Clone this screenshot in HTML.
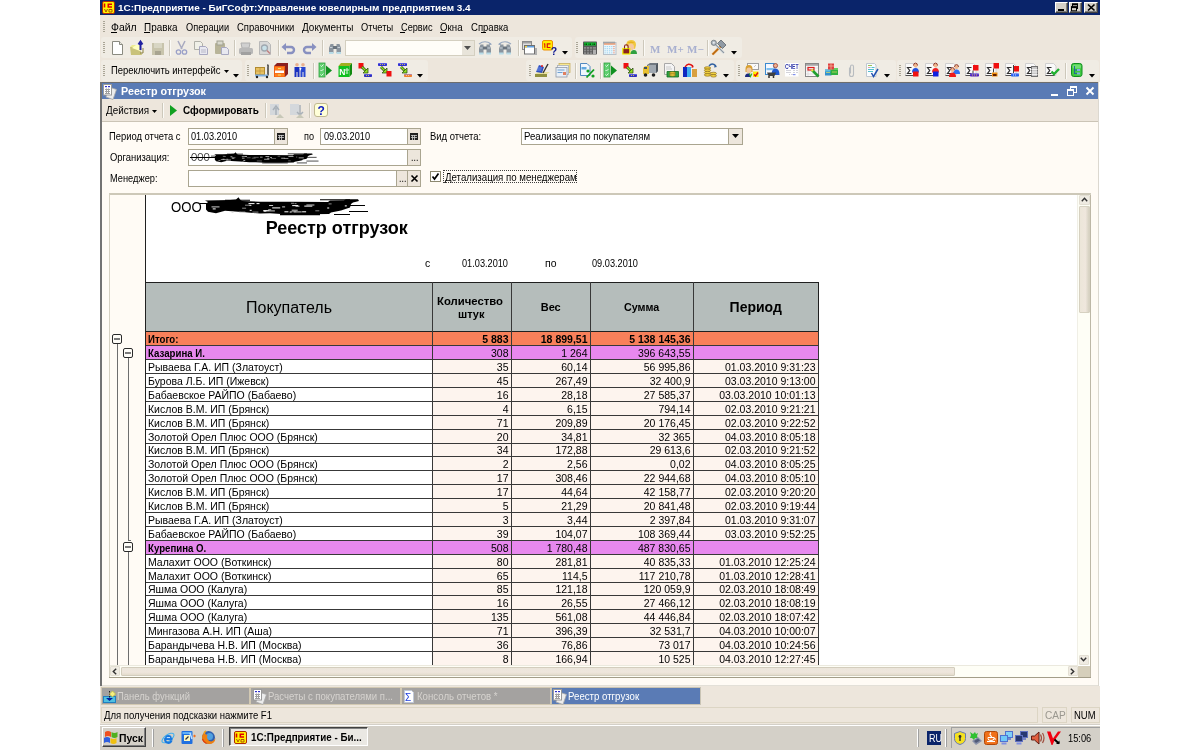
<!DOCTYPE html><html><head><meta charset="utf-8"><style>
html,body{margin:0;padding:0;width:1200px;height:750px;overflow:hidden;background:#fff;}
body{position:relative;font-family:"Liberation Sans",sans-serif;}
div,span{position:absolute;box-sizing:border-box;}
.t{white-space:nowrap;line-height:1;transform-origin:left top;}
.r{transform-origin:right top;}
</style></head><body><div id="root" style="position:absolute;left:0;top:0;width:1200px;height:750px;will-change:transform;">
<div style="left:100px;top:0px;width:1000px;height:750px;background:#ede6dc;"></div>
<div style="left:100px;top:0px;width:1000px;height:15px;background:#0a246a;"></div>
<svg style="position:absolute;left:102px;top:1px;overflow:visible" width="13" height="13" viewBox="0 0 13 13"><rect x="0.5" y="0.5" width="12" height="12" rx="1.5" fill="#fff200" stroke="#b02a00"/><path d="M2.5 2.5v4M4.5 3.5h0" stroke="#e00000" stroke-width="1.6"/><path d="M10 3.2H6.3V6H10" fill="none" stroke="#e00000" stroke-width="1.6"/><path d="M2.5 8l1.5 3l1.5-3M7 8.5h3v2.5h-3z" fill="none" stroke="#b05000" stroke-width="1"/></svg>
<span class="t" style="left:118px;top:2.87px;font-size:9.6px;font-weight:bold;color:#fff;transform:scaleX(1.038);">1С:Предприятие - БиГСофт:Управление ювелирным предприятием 3.4</span>
<div style="left:1055px;top:2px;width:13px;height:11px;background:#d4d0c8;border-top:1px solid #fff;border-left:1px solid #fff;border-right:1px solid #404040;border-bottom:1px solid #404040;box-shadow:inset -1px -1px #808080;"></div>
<div style="left:1069px;top:2px;width:13px;height:11px;background:#d4d0c8;border-top:1px solid #fff;border-left:1px solid #fff;border-right:1px solid #404040;border-bottom:1px solid #404040;box-shadow:inset -1px -1px #808080;"></div>
<div style="left:1084px;top:2px;width:14px;height:11px;background:#d4d0c8;border-top:1px solid #fff;border-left:1px solid #fff;border-right:1px solid #404040;border-bottom:1px solid #404040;box-shadow:inset -1px -1px #808080;"></div>
<svg style="position:absolute;left:1055px;top:2px;overflow:visible" width="13" height="11" viewBox="0 0 13 11"><rect x="3" y="7" width="6" height="2" fill="#000"/></svg>
<svg style="position:absolute;left:1069px;top:2px;overflow:visible" width="13" height="11" viewBox="0 0 13 11"><rect x="3.5" y="2" width="5" height="4.5" fill="none" stroke="#000"/><rect x="3" y="1.5" width="6" height="1.8" fill="#000"/><rect x="2.5" y="4.8" width="5" height="4" fill="#d4d0c8" stroke="#000"/><rect x="2" y="4.3" width="6" height="1.8" fill="#000"/></svg>
<svg style="position:absolute;left:1084px;top:2px;overflow:visible" width="14" height="11" viewBox="0 0 14 11"><path d="M4 2.5 L10.5 8.5 M10.5 2.5 L4 8.5" stroke="#000" stroke-width="1.7"/></svg>
<svg style="position:absolute;left:103px;top:21px;overflow:visible" width="2" height="12" viewBox="0 0 2 12"><rect x="0" y="0" width="2" height="1" fill="#aaa596"/><rect x="0" y="2" width="2" height="1" fill="#aaa596"/><rect x="0" y="4" width="2" height="1" fill="#aaa596"/><rect x="0" y="6" width="2" height="1" fill="#aaa596"/><rect x="0" y="8" width="2" height="1" fill="#aaa596"/><rect x="0" y="10" width="2" height="1" fill="#aaa596"/></svg>
<span class="t" style="left:111.3px;top:21.69px;font-size:11px;color:#000;transform:scaleX(0.95);">Файл</span>
<div style="left:111px;top:32px;width:6px;height:1px;background:#000;"></div>
<span class="t" style="left:144px;top:21.69px;font-size:11px;color:#000;transform:scaleX(0.902);">Правка</span>
<div style="left:144px;top:32px;width:6px;height:1px;background:#000;"></div>
<span class="t" style="left:185.8px;top:21.69px;font-size:11px;color:#000;transform:scaleX(0.839);">Операции</span>
<span class="t" style="left:236.7px;top:21.69px;font-size:11px;color:#000;transform:scaleX(0.86);">Справочники</span>
<span class="t" style="left:301.9px;top:21.69px;font-size:11px;color:#000;transform:scaleX(0.905);">Документы</span>
<span class="t" style="left:360.9px;top:21.69px;font-size:11px;color:#000;transform:scaleX(0.844);">Отчеты</span>
<span class="t" style="left:400.5px;top:21.69px;font-size:11px;color:#000;transform:scaleX(0.836);">Сервис</span>
<div style="left:400px;top:32px;width:5px;height:1px;background:#000;"></div>
<span class="t" style="left:440.4px;top:21.69px;font-size:11px;color:#000;transform:scaleX(0.884);">Окна</span>
<div style="left:440px;top:32px;width:6px;height:1px;background:#000;"></div>
<span class="t" style="left:470.6px;top:21.69px;font-size:11px;color:#000;transform:scaleX(0.867);">Справка</span>
<div style="left:481px;top:32px;width:5px;height:1px;background:#000;"></div>
<div style="left:101px;top:37px;width:471px;height:21px;background:#f0ece4;border-radius:3px;"></div>
<div style="left:575px;top:37px;width:167px;height:21px;background:#f0ece4;border-radius:3px;"></div>
<div style="left:101px;top:60px;width:141px;height:21px;background:#f0ece4;border-radius:3px;"></div>
<div style="left:245px;top:60px;width:183px;height:21px;background:#f0ece4;border-radius:3px;"></div>
<div style="left:526px;top:60px;width:208px;height:21px;background:#f0ece4;border-radius:3px;"></div>
<div style="left:736px;top:60px;width:160px;height:21px;background:#f0ece4;border-radius:3px;"></div>
<div style="left:897px;top:60px;width:202px;height:21px;background:#f0ece4;border-radius:3px;"></div>
<svg style="position:absolute;left:103px;top:42px;overflow:visible" width="2" height="12" viewBox="0 0 2 12"><rect x="0" y="0" width="2" height="1" fill="#aaa596"/><rect x="0" y="2" width="2" height="1" fill="#aaa596"/><rect x="0" y="4" width="2" height="1" fill="#aaa596"/><rect x="0" y="6" width="2" height="1" fill="#aaa596"/><rect x="0" y="8" width="2" height="1" fill="#aaa596"/><rect x="0" y="10" width="2" height="1" fill="#aaa596"/></svg>
<svg style="position:absolute;left:576px;top:42px;overflow:visible" width="2" height="12" viewBox="0 0 2 12"><rect x="0" y="0" width="2" height="1" fill="#aaa596"/><rect x="0" y="2" width="2" height="1" fill="#aaa596"/><rect x="0" y="4" width="2" height="1" fill="#aaa596"/><rect x="0" y="6" width="2" height="1" fill="#aaa596"/><rect x="0" y="8" width="2" height="1" fill="#aaa596"/><rect x="0" y="10" width="2" height="1" fill="#aaa596"/></svg>
<svg style="position:absolute;left:103px;top:65px;overflow:visible" width="2" height="12" viewBox="0 0 2 12"><rect x="0" y="0" width="2" height="1" fill="#aaa596"/><rect x="0" y="2" width="2" height="1" fill="#aaa596"/><rect x="0" y="4" width="2" height="1" fill="#aaa596"/><rect x="0" y="6" width="2" height="1" fill="#aaa596"/><rect x="0" y="8" width="2" height="1" fill="#aaa596"/><rect x="0" y="10" width="2" height="1" fill="#aaa596"/></svg>
<svg style="position:absolute;left:247px;top:65px;overflow:visible" width="2" height="12" viewBox="0 0 2 12"><rect x="0" y="0" width="2" height="1" fill="#aaa596"/><rect x="0" y="2" width="2" height="1" fill="#aaa596"/><rect x="0" y="4" width="2" height="1" fill="#aaa596"/><rect x="0" y="6" width="2" height="1" fill="#aaa596"/><rect x="0" y="8" width="2" height="1" fill="#aaa596"/><rect x="0" y="10" width="2" height="1" fill="#aaa596"/></svg>
<svg style="position:absolute;left:529px;top:65px;overflow:visible" width="2" height="12" viewBox="0 0 2 12"><rect x="0" y="0" width="2" height="1" fill="#aaa596"/><rect x="0" y="2" width="2" height="1" fill="#aaa596"/><rect x="0" y="4" width="2" height="1" fill="#aaa596"/><rect x="0" y="6" width="2" height="1" fill="#aaa596"/><rect x="0" y="8" width="2" height="1" fill="#aaa596"/><rect x="0" y="10" width="2" height="1" fill="#aaa596"/></svg>
<svg style="position:absolute;left:738px;top:65px;overflow:visible" width="2" height="12" viewBox="0 0 2 12"><rect x="0" y="0" width="2" height="1" fill="#aaa596"/><rect x="0" y="2" width="2" height="1" fill="#aaa596"/><rect x="0" y="4" width="2" height="1" fill="#aaa596"/><rect x="0" y="6" width="2" height="1" fill="#aaa596"/><rect x="0" y="8" width="2" height="1" fill="#aaa596"/><rect x="0" y="10" width="2" height="1" fill="#aaa596"/></svg>
<svg style="position:absolute;left:899px;top:65px;overflow:visible" width="2" height="12" viewBox="0 0 2 12"><rect x="0" y="0" width="2" height="1" fill="#aaa596"/><rect x="0" y="2" width="2" height="1" fill="#aaa596"/><rect x="0" y="4" width="2" height="1" fill="#aaa596"/><rect x="0" y="6" width="2" height="1" fill="#aaa596"/><rect x="0" y="8" width="2" height="1" fill="#aaa596"/><rect x="0" y="10" width="2" height="1" fill="#aaa596"/></svg>
<svg style="position:absolute;left:110px;top:40px;overflow:visible" width="16" height="16" viewBox="0 0 16 16"><path d="M2.5 1.5h7l3 3v10h-10z" fill="#fff" stroke="#8a8a80"/><path d="M9.5 1.5v3h3" fill="#e8e8e0" stroke="#8a8a80"/></svg>
<svg style="position:absolute;left:129px;top:40px;overflow:visible" width="16" height="16" viewBox="0 0 16 16"><path d="M1 7h9l3 8H2z" fill="#c9c27a"/><path d="M1 7l2-2h5l1 2" fill="#ecec90"/><path d="M3 8l4-3h4v6z" fill="#ffffc0"/><path d="M11 13h3V8" fill="none" stroke="#8a8040"/><path d="M11.5 10V2M9.5 4.5l2-3 2 3" stroke="#2020a0" stroke-width="2" fill="none"/></svg>
<svg style="position:absolute;left:151px;top:41px;overflow:visible" width="16" height="16" viewBox="0 0 16 16"><rect x="1" y="2" width="12" height="12" fill="#c8c4ac"/><rect x="3" y="2" width="8" height="5" fill="#d8d6c4"/><rect x="4" y="10" width="6" height="4" fill="#a8a490"/></svg>
<div style="left:169px;top:40px;width:1px;height:16px;background:#cdc8bb;"></div>
<div style="left:170px;top:40px;width:1px;height:16px;background:#fbfaf6;"></div>
<svg style="position:absolute;left:174px;top:40px;overflow:visible" width="16" height="16" viewBox="0 0 16 16"><path d="M4 1l4 8M11 1L7 9" stroke="#a8aac0" stroke-width="1.5"/><circle cx="4.5" cy="12" r="2.2" fill="none" stroke="#9aa0c8" stroke-width="1.3"/><circle cx="10.5" cy="12" r="2.2" fill="none" stroke="#9aa0c8" stroke-width="1.3"/></svg>
<svg style="position:absolute;left:193px;top:40px;overflow:visible" width="16" height="16" viewBox="0 0 16 16"><path d="M1.5 1.5h6l2 2v6h-8z" fill="#f0f0e8" stroke="#b0b0a8"/><path d="M6.5 6.5h6l2 2v6h-8z" fill="#e8e8f0" stroke="#a8a8c0"/><path d="M8 10h5M8 12h5" stroke="#b8b8c8"/></svg>
<svg style="position:absolute;left:214px;top:40px;overflow:visible" width="16" height="16" viewBox="0 0 16 16"><rect x="1" y="3" width="10" height="11" rx="1" fill="#b8b498"/><rect x="3" y="1" width="6" height="4" fill="#d8d8cc" stroke="#a0a090"/><path d="M7.5 7.5h5l2 2v5h-7z" fill="#e8e8f0" stroke="#a8a8c0"/></svg>
<div style="left:234px;top:40px;width:1px;height:16px;background:#cdc8bb;"></div>
<div style="left:235px;top:40px;width:1px;height:16px;background:#fbfaf6;"></div>
<svg style="position:absolute;left:238px;top:41px;overflow:visible" width="16" height="16" viewBox="0 0 16 16"><path d="M3 2h9l-1 5H4z" fill="#d0d0d0" stroke="#b0b0b0"/><rect x="1" y="7" width="14" height="6" rx="1.5" fill="#b8b8b8"/><rect x="3" y="11" width="10" height="3" fill="#a0a0a0"/></svg>
<svg style="position:absolute;left:258px;top:40px;overflow:visible" width="16" height="16" viewBox="0 0 16 16"><path d="M1.5 1.5h8l3 3v10h-11z" fill="#d8d8d8" stroke="#b8b8b8"/><circle cx="6.5" cy="8" r="3" fill="#c8e0e8" stroke="#a0a8b0" stroke-width="1.3"/><path d="M9 10.5l3 3" stroke="#c08080" stroke-width="1.5"/></svg>
<div style="left:278px;top:40px;width:1px;height:16px;background:#cdc8bb;"></div>
<div style="left:279px;top:40px;width:1px;height:16px;background:#fbfaf6;"></div>
<svg style="position:absolute;left:281px;top:42px;overflow:visible" width="16" height="16" viewBox="0 0 16 16"><path d="M4 5h6a3 3 0 0 1 0 6H6" fill="none" stroke="#8890c0" stroke-width="2.4"/><path d="M0.5 5L5 1v8z" fill="#8890c0"/></svg>
<svg style="position:absolute;left:301px;top:42px;overflow:visible" width="16" height="16" viewBox="0 0 16 16"><path d="M12 5H6a3 3 0 0 0 0 6h4" fill="none" stroke="#8890c0" stroke-width="2.4"/><path d="M15.5 5L11 1v8z" fill="#8890c0"/></svg>
<div style="left:322px;top:40px;width:1px;height:16px;background:#cdc8bb;"></div>
<div style="left:323px;top:40px;width:1px;height:16px;background:#fbfaf6;"></div>
<svg style="position:absolute;left:328px;top:41px;overflow:visible" width="16" height="16" viewBox="0 0 16 16"><g transform="translate(0,0)"><path d="M1 12V7l1.5-4h3V12z" fill="#8a949e"/><path d="M8.5 12V3h3L13 7v5z" fill="#8a949e"/><rect x="5" y="5" width="4" height="3" fill="#6a747e"/><path d="M2 6.5h2.5M9.5 6.5H12" stroke="#c8d0d8" stroke-width="1"/><rect x="1" y="11" width="4.5" height="2" fill="#b8dce8"/><rect x="8.5" y="11" width="4.5" height="2" fill="#b8dce8"/></g></svg>
<div style="left:345px;top:40px;width:130px;height:16px;background:#fffdf8;border:1px solid #d4cfc0;"></div>
<div style="left:462px;top:41px;width:12px;height:14px;background:#e8e4da;"></div>
<svg style="position:absolute;left:464px;top:46px;overflow:visible" width="7" height="4" viewBox="0 0 7 4"><path d="M0 0h7L3.5 4z" fill="#505050"/></svg>
<svg style="position:absolute;left:477px;top:40px;overflow:visible" width="16" height="16" viewBox="0 0 16 16"><path d="M2 4q6-4.5 12 0" fill="none" stroke="#98a8c0" stroke-width="1.1"/><path d="M12.5 2.5l2.5 2-3 0.8z" fill="#98a8c0"/><g transform="translate(1,1.5)"><path d="M1 12V7l1.5-4h3V12z" fill="#8a949e"/><path d="M8.5 12V3h3L13 7v5z" fill="#8a949e"/><rect x="5" y="5" width="4" height="3" fill="#6a747e"/><path d="M2 6.5h2.5M9.5 6.5H12" stroke="#c8d0d8" stroke-width="1"/><rect x="1" y="11" width="4.5" height="2" fill="#b8dce8"/><rect x="8.5" y="11" width="4.5" height="2" fill="#b8dce8"/></g></svg>
<svg style="position:absolute;left:497px;top:40px;overflow:visible" width="16" height="16" viewBox="0 0 16 16"><path d="M2 4q6-4.5 12 0" fill="none" stroke="#98a8c0" stroke-width="1.1"/><path d="M3.5 2.5L1 4.5l3 0.8z" fill="#98a8c0"/><g transform="translate(1,1.5)"><path d="M1 12V7l1.5-4h3V12z" fill="#8a949e"/><path d="M8.5 12V3h3L13 7v5z" fill="#8a949e"/><rect x="5" y="5" width="4" height="3" fill="#6a747e"/><path d="M2 6.5h2.5M9.5 6.5H12" stroke="#c8d0d8" stroke-width="1"/><rect x="1" y="11" width="4.5" height="2" fill="#b8dce8"/><rect x="8.5" y="11" width="4.5" height="2" fill="#b8dce8"/></g></svg>
<div style="left:518px;top:40px;width:1px;height:16px;background:#cdc8bb;"></div>
<div style="left:519px;top:40px;width:1px;height:16px;background:#fbfaf6;"></div>
<svg style="position:absolute;left:522px;top:41px;overflow:visible" width="16" height="16" viewBox="0 0 16 16"><rect x="0.5" y="0.5" width="9" height="8" fill="#e0e0e0" stroke="#8a8a8a"/><rect x="1" y="1" width="8" height="1.5" fill="#a0a0a0"/><rect x="2.5" y="4.5" width="10" height="8.5" fill="#ffffff" stroke="#707070"/><rect x="3" y="5" width="9" height="1.5" fill="#60a0e0"/><rect x="3" y="5" width="2" height="1.5" fill="#f0d040"/><rect x="13" y="7" width="2" height="7" fill="#b0b0b0"/><rect x="4" y="13" width="11" height="1" fill="#b0b0b0"/></svg>
<svg style="position:absolute;left:542px;top:40px;overflow:visible" width="16" height="16" viewBox="0 0 16 16"><rect x="0.5" y="0.5" width="10" height="9.5" rx="1.5" fill="#ffee00" stroke="#f09000" stroke-width="1"/><path d="M2.8 3.5v4.2M2 4.3L2.8 3.5" stroke="#e01010" stroke-width="1.1" fill="none"/><path d="M8.5 3.8H5.3V7.5H8.5" stroke="#e01010" stroke-width="1.2" fill="none"/><text x="8.8" y="14.5" font-family="Liberation Sans" font-weight="bold" font-size="10.5" fill="#101890">?</text></svg>
<svg style="position:absolute;left:562px;top:51px;overflow:visible" width="6" height="4" viewBox="0 0 6 4"><path d="M0 0h6L3 3.5z" fill="#000"/></svg>
<svg style="position:absolute;left:583px;top:41px;overflow:visible" width="16" height="16" viewBox="0 0 16 16"><rect x="0" y="0.5" width="14" height="13" rx="0.8" fill="#585858"/><rect x="1" y="1.5" width="12" height="3" fill="#10c030"/><path d="M2 2.5v1.5M3.5 2.5v1.5M6 2.5v1.5M7.5 2.5v1.5M10 2.5v1.5M11.5 2.5v1.5" stroke="#003000" stroke-width="0.8"/><rect x="1" y="6.0" width="2.2" height="1.8" fill="#8a8a8a"/><rect x="1" y="8.6" width="2.2" height="1.8" fill="#8a8a8a"/><rect x="1" y="11.2" width="2.2" height="1.8" fill="#8a8a8a"/><rect x="4" y="6.0" width="2.2" height="1.8" fill="#8a8a8a"/><rect x="4" y="8.6" width="2.2" height="1.8" fill="#8a8a8a"/><rect x="4" y="11.2" width="2.2" height="1.8" fill="#8a8a8a"/><rect x="7" y="6.0" width="2.2" height="1.8" fill="#8a8a8a"/><rect x="7" y="8.6" width="2.2" height="1.8" fill="#8a8a8a"/><rect x="7" y="11.2" width="2.2" height="1.8" fill="#8a8a8a"/><rect x="10" y="6" width="3" height="1.8" fill="#8a8a8a"/><rect x="10" y="8.6" width="3" height="4.4" fill="#b0b0b0"/></svg>
<svg style="position:absolute;left:603px;top:41px;overflow:visible" width="16" height="16" viewBox="0 0 16 16"><rect x="0.5" y="1.5" width="12.5" height="12" fill="#eaf6fc" stroke="#b8c0c8"/><rect x="1" y="2" width="11.5" height="2" fill="#f0b090"/><path d="M1 0.5v2M3 0.5v2M5 0.5v2M7 0.5v2M9 0.5v2M11 0.5v2" stroke="#707070" stroke-width="0.7"/><rect x="1.5" y="5.0" width="1.3" height="1.1" fill="#a8d8f0"/><rect x="1.5" y="7.1" width="1.3" height="1.1" fill="#a8d8f0"/><rect x="1.5" y="9.2" width="1.3" height="1.1" fill="#a8d8f0"/><rect x="1.5" y="11.3" width="1.3" height="1.1" fill="#a8d8f0"/><rect x="3.7" y="5.0" width="1.3" height="1.1" fill="#a8d8f0"/><rect x="3.7" y="7.1" width="1.3" height="1.1" fill="#a8d8f0"/><rect x="3.7" y="9.2" width="1.3" height="1.1" fill="#a8d8f0"/><rect x="3.7" y="11.3" width="1.3" height="1.1" fill="#a8d8f0"/><rect x="5.9" y="5.0" width="1.3" height="1.1" fill="#a8d8f0"/><rect x="5.9" y="7.1" width="1.3" height="1.1" fill="#a8d8f0"/><rect x="5.9" y="9.2" width="1.3" height="1.1" fill="#a8d8f0"/><rect x="5.9" y="11.3" width="1.3" height="1.1" fill="#a8d8f0"/><rect x="8.100000000000001" y="5.0" width="1.3" height="1.1" fill="#a8d8f0"/><rect x="8.100000000000001" y="7.1" width="1.3" height="1.1" fill="#a8d8f0"/><rect x="8.100000000000001" y="9.2" width="1.3" height="1.1" fill="#a8d8f0"/><rect x="8.100000000000001" y="11.3" width="1.3" height="1.1" fill="#a8d8f0"/><rect x="10.3" y="5.0" width="1.3" height="1.1" fill="#f09070"/><rect x="10.3" y="7.1" width="1.3" height="1.1" fill="#f09070"/><rect x="10.3" y="9.2" width="1.3" height="1.1" fill="#f09070"/><rect x="10.3" y="11.3" width="1.3" height="1.1" fill="#f09070"/></svg>
<svg style="position:absolute;left:622px;top:40px;overflow:visible" width="16" height="16" viewBox="0 0 16 16"><path d="M4 6q0-6 5-6t5 5l-1 4z" fill="#f0c840"/><ellipse cx="9" cy="7" rx="3" ry="3.6" fill="#f4c8a0"/><path d="M8 14q1-4 4-4t3 4z" fill="#30a040"/><path d="M5 3q4-3 8 0" fill="#e8b020"/><rect x="0.8" y="8.5" width="7" height="5.5" fill="#8a2020" stroke="#f0f000" stroke-width="1.2"/><path d="M2.5 8.5v-2a1.8 1.8 0 0 1 3.6 0v2" fill="none" stroke="#8a2020" stroke-width="1.1"/></svg>
<div style="left:643px;top:40px;width:1px;height:16px;background:#cdc8bb;"></div>
<div style="left:644px;top:40px;width:1px;height:16px;background:#fbfaf6;"></div>
<svg style="position:absolute;left:650px;top:42px;overflow:visible" width="16" height="16" viewBox="0 0 16 16"><text x="0" y="11" font-family="Liberation Serif" font-weight="bold" font-size="11" fill="#a8b0d0">M</text></svg>
<svg style="position:absolute;left:667px;top:42px;overflow:visible" width="16" height="16" viewBox="0 0 16 16"><text x="0" y="11" font-family="Liberation Serif" font-weight="bold" font-size="11" fill="#a8b0d0">M+</text></svg>
<svg style="position:absolute;left:687px;top:42px;overflow:visible" width="16" height="16" viewBox="0 0 16 16"><text x="0" y="11" font-family="Liberation Serif" font-weight="bold" font-size="11" fill="#a8b0d0">M−</text></svg>
<div style="left:707px;top:40px;width:1px;height:16px;background:#cdc8bb;"></div>
<div style="left:708px;top:40px;width:1px;height:16px;background:#fbfaf6;"></div>
<svg style="position:absolute;left:711px;top:40px;overflow:visible" width="16" height="16" viewBox="0 0 16 16"><path d="M1.5 14.5L10 6" stroke="#d08020" stroke-width="2.4"/><path d="M1.5 14.5L10 6" stroke="#a05010" stroke-width="0.6"/><path d="M6.5 3.5L10 0l5 5-3.5 3.5z" fill="#909aa4" stroke="#505860" stroke-width="0.7"/><path d="M3 3l10 10" stroke="#c0c8d0" stroke-width="2.2"/><path d="M3 3l10 10" stroke="#707880" stroke-width="0.6"/><circle cx="2.8" cy="2.8" r="2.6" fill="#b0b8c0" stroke="#606870" stroke-width="0.7"/><circle cx="2.8" cy="2.8" r="1" fill="#e8ecf0"/></svg>
<svg style="position:absolute;left:731px;top:51px;overflow:visible" width="6" height="4" viewBox="0 0 6 4"><path d="M0 0h6L3 3.5z" fill="#000"/></svg>
<span class="t" style="left:110.5px;top:64.69px;font-size:11px;color:#000;transform:scaleX(0.859);">Переключить интерфейс</span>
<svg style="position:absolute;left:224px;top:70px;overflow:visible" width="5" height="3" viewBox="0 0 5 3"><path d="M0 0h5L2.5 3z" fill="#000"/></svg>
<svg style="position:absolute;left:233px;top:74px;overflow:visible" width="6" height="4" viewBox="0 0 6 4"><path d="M0 0h6L3 3.5z" fill="#000"/></svg>
<svg style="position:absolute;left:255px;top:63px;overflow:visible" width="16" height="16" viewBox="0 0 16 16"><rect x="0.5" y="4.5" width="9" height="7" fill="#e8c060" stroke="#b08a30"/><path d="M5 4.5v7M0.5 8h9" stroke="#c09840" stroke-width="0.8"/><path d="M12.5 1.5q1 1 0.5 3v8" fill="none" stroke="#303030" stroke-width="1.4"/><rect x="0" y="11.5" width="13" height="2" fill="#80b0e0"/><circle cx="2" cy="14" r="1.2" fill="#202020"/><circle cx="12" cy="14" r="1.2" fill="#202020"/></svg>
<svg style="position:absolute;left:274px;top:63px;overflow:visible" width="16" height="16" viewBox="0 0 16 16"><path d="M0 3l3-3h11v11l-3 3z" fill="#8a2020"/><rect x="0" y="3" width="11" height="11" fill="#f06010"/><rect x="1" y="4" width="9" height="3" fill="#ff8020"/><rect x="1" y="7.5" width="9" height="2.5" fill="#ffffff"/><rect x="1" y="10.5" width="9" height="3" fill="#ff8020"/><rect x="4" y="5" width="3" height="1" fill="#f0e060"/><rect x="4" y="11.5" width="3" height="1" fill="#f0e060"/></svg>
<svg style="position:absolute;left:294px;top:63px;overflow:visible" width="16" height="16" viewBox="0 0 16 16"><circle cx="3" cy="1.8" r="1.8" fill="#e8b090"/><circle cx="9" cy="1.8" r="1.8" fill="#e8b090"/><path d="M0.5 4h5v10h-2V9h-1v5h-2z" fill="#1830c0"/><path d="M6.5 4h5v10h-2V9h-1v5h-2z" fill="#2848d0"/><path d="M5.5 5l1 3 1-3" fill="#fff"/></svg>
<div style="left:313px;top:63px;width:1px;height:16px;background:#cdc8bb;"></div>
<div style="left:314px;top:63px;width:1px;height:16px;background:#fbfaf6;"></div>
<svg style="position:absolute;left:319px;top:63px;overflow:visible" width="16" height="16" viewBox="0 0 16 16"><rect x="0" y="0" width="6" height="14" fill="#60d070" stroke="#30a040" stroke-width="0.8"/><path d="M1.5 2.5l1 1 2-2M1.5 7l1 1 2-2M1.5 11.5l1 1 2-2" stroke="#fff" stroke-width="0.8" fill="none"/><path d="M7 2.5l6 5-6 5z" fill="#109020"/></svg>
<svg style="position:absolute;left:338px;top:63px;overflow:visible" width="16" height="16" viewBox="0 0 16 16"><path d="M0.5 3l2.5-3h11l-2.5 3z" fill="#a0b020"/><path d="M11.5 3l2.5-3v11l-2.5 3z" fill="#108a10"/><rect x="0.5" y="3" width="11" height="11" fill="#10c020"/><text x="1.2" y="12" font-family="Liberation Sans" font-weight="bold" font-size="8.5" fill="#fff">N</text><circle cx="9" cy="7" r="1.2" fill="none" stroke="#fff" stroke-width="0.9"/><path d="M7.8 10h2.4" stroke="#fff"/></svg>
<svg style="position:absolute;left:358px;top:63px;overflow:visible" width="16" height="16" viewBox="0 0 16 16"><rect x="0.5" y="0" width="5" height="5.5" fill="#f01010"/><path d="M4 4l4 4" stroke="#204010" stroke-width="2.6"/><path d="M4 4l4 4" stroke="#90e020" stroke-width="1.4"/><path d="M10 5v5h-5z" fill="#90e020" stroke="#204010" stroke-width="0.7"/><rect x="6" y="11" width="8" height="3" rx="0.8" fill="#3030c0"/><rect x="6" y="11" width="8" height="1" fill="#8080ff" opacity="0.5"/><path d="M8 12.5h4" stroke="#f0e040" stroke-dasharray="1 1" stroke-width="0.8"/></svg>
<svg style="position:absolute;left:378px;top:63px;overflow:visible" width="16" height="16" viewBox="0 0 16 16"><rect x="0" y="0" width="9" height="3" rx="0.8" fill="#3030d0"/><rect x="0" y="0" width="9" height="1" fill="#8080ff" opacity="0.5"/><path d="M2 1.5h5" stroke="#f0e040" stroke-dasharray="1 1" stroke-width="0.8"/><path d="M3 4l4 4" stroke="#204010" stroke-width="2.6"/><path d="M3 4l4 4" stroke="#90e020" stroke-width="1.4"/><path d="M9 5v5h-5z" fill="#90e020" stroke="#204010" stroke-width="0.7"/><rect x="8.5" y="8" width="5" height="5.5" fill="#f01010"/></svg>
<svg style="position:absolute;left:398px;top:63px;overflow:visible" width="16" height="16" viewBox="0 0 16 16"><rect x="0" y="0" width="9" height="3" rx="0.8" fill="#3030d0"/><rect x="0" y="0" width="9" height="1" fill="#8080ff" opacity="0.5"/><path d="M2 1.5h5" stroke="#f0e040" stroke-dasharray="1 1" stroke-width="0.8"/><path d="M3 4l4 4" stroke="#204010" stroke-width="2.6"/><path d="M3 4l4 4" stroke="#90e020" stroke-width="1.4"/><path d="M9 5v5h-5z" fill="#90e020" stroke="#204010" stroke-width="0.7"/><rect x="6" y="11" width="8" height="3" rx="0.8" fill="#f08030"/><rect x="6" y="11" width="8" height="1" fill="#8080ff" opacity="0.5"/><path d="M8 12.5h4" stroke="#ffd0a0" stroke-dasharray="1 1" stroke-width="0.8"/></svg>
<svg style="position:absolute;left:417px;top:74px;overflow:visible" width="6" height="4" viewBox="0 0 6 4"><path d="M0 0h6L3 3.5z" fill="#000"/></svg>
<svg style="position:absolute;left:535px;top:63px;overflow:visible" width="16" height="16" viewBox="0 0 16 16"><path d="M0 11l3-2h12l-3 2z" fill="#e8e0a0"/><rect x="0" y="11" width="12" height="3" fill="#909040"/><path d="M1 9l3-7 5 2-2 6z" fill="#3050c0"/><path d="M2 5h5M1.5 7h5" stroke="#a0c0ff" stroke-width="0.6"/><path d="M8 10l5-9" stroke="#303030" stroke-width="1.4"/><rect x="4" y="0" width="3" height="2" fill="#f0f0f0"/><circle cx="7" cy="3" r="1" fill="#e02020"/></svg>
<svg style="position:absolute;left:556px;top:63px;overflow:visible" width="16" height="16" viewBox="0 0 16 16"><rect x="3" y="0.5" width="11" height="9" fill="#f8e890" stroke="#c8b060" stroke-width="0.8"/><rect x="1.5" y="2.5" width="11" height="9" fill="#f0f4f8" stroke="#a8b0b8" stroke-width="0.8"/><rect x="0" y="4.5" width="11" height="9.5" fill="#e8f0f8" stroke="#909aa8" stroke-width="0.8"/><path d="M1.5 7h7M1.5 9.5h5" stroke="#70a0d0"/><rect x="7" y="9" width="3" height="3" fill="#e08060"/></svg>
<div style="left:575px;top:63px;width:1px;height:16px;background:#cdc8bb;"></div>
<div style="left:576px;top:63px;width:1px;height:16px;background:#fbfaf6;"></div>
<svg style="position:absolute;left:580px;top:63px;overflow:visible" width="16" height="16" viewBox="0 0 16 16"><path d="M0.5 0.5h6.5l3 3v9h-9.5z" fill="#f0f6fc" stroke="#5088c0"/><rect x="1.5" y="4" width="5" height="2.5" fill="#60a8e0"/><path d="M6.5 14.5l7.5-8" stroke="#10a020" stroke-width="1.8"/><circle cx="8" cy="8" r="1.6" fill="#10a020"/><circle cx="13" cy="13" r="1.6" fill="#10a020"/></svg>
<div style="left:600px;top:63px;width:1px;height:16px;background:#cdc8bb;"></div>
<div style="left:601px;top:63px;width:1px;height:16px;background:#fbfaf6;"></div>
<svg style="position:absolute;left:604px;top:63px;overflow:visible" width="16" height="16" viewBox="0 0 16 16"><rect x="0" y="0" width="6" height="14" fill="#60d070" stroke="#30a040" stroke-width="0.8"/><path d="M1.5 2.5l1 1 2-2M1.5 7l1 1 2-2M1.5 11.5l1 1 2-2" stroke="#fff" stroke-width="0.8" fill="none"/><path d="M7 2.5l6 5-6 5z" fill="#109020"/></svg>
<svg style="position:absolute;left:623px;top:63px;overflow:visible" width="16" height="16" viewBox="0 0 16 16"><rect x="0.5" y="0" width="5" height="5.5" fill="#f01010"/><path d="M4 4l4 4" stroke="#204010" stroke-width="2.6"/><path d="M4 4l4 4" stroke="#90e020" stroke-width="1.4"/><path d="M10 5v5h-5z" fill="#90e020" stroke="#204010" stroke-width="0.7"/><rect x="6" y="11" width="8" height="3" rx="0.8" fill="#3030c0"/><rect x="6" y="11" width="8" height="1" fill="#8080ff" opacity="0.5"/><path d="M8 12.5h4" stroke="#f0e040" stroke-dasharray="1 1" stroke-width="0.8"/></svg>
<svg style="position:absolute;left:643px;top:63px;overflow:visible" width="16" height="16" viewBox="0 0 16 16"><path d="M4 2l3-2h8v8l-2 2H4z" fill="#707880"/><rect x="5" y="2" width="8" height="8" fill="#a0a8b0"/><path d="M13 2l2-2v8l-2 2z" fill="#505860"/><path d="M0 5l2-2h4v8H0z" fill="#e8c030"/><rect x="1" y="4" width="3" height="2" fill="#405060"/><circle cx="2.5" cy="12" r="1.8" fill="#202020"/><circle cx="10.5" cy="12" r="1.8" fill="#202020"/></svg>
<svg style="position:absolute;left:664px;top:63px;overflow:visible" width="16" height="16" viewBox="0 0 16 16"><path d="M0.5 0.5h7l3 3v8h-10z" fill="#f4f4f4" stroke="#a8a8a8"/><path d="M2 4h5M2 6h6" stroke="#c0c0c0" stroke-width="0.8"/><path d="M3 8.5h11.5v5.5H3z" fill="#30a040" stroke="#107020" stroke-width="0.8"/><ellipse cx="8.5" cy="10" rx="3" ry="1.2" fill="#f0d040" stroke="#806010" stroke-width="0.6"/><ellipse cx="8.5" cy="12" rx="3" ry="1.2" fill="#f0d040" stroke="#806010" stroke-width="0.6"/></svg>
<svg style="position:absolute;left:683px;top:63px;overflow:visible" width="16" height="16" viewBox="0 0 16 16"><rect x="0" y="4" width="4" height="10" fill="#1028c0"/><rect x="4" y="4" width="4" height="10" fill="#40b0f0"/><path d="M8 5l4-1v10l-4 0z" fill="#f0f0f0"/><rect x="9" y="6" width="5" height="8" fill="#d8a040"/><path d="M2 4q3-5 8-1" fill="none" stroke="#e01010" stroke-width="1.4"/><path d="M9 2l2 2-2.5 1z" fill="#e01010"/></svg>
<svg style="position:absolute;left:704px;top:63px;overflow:visible" width="16" height="16" viewBox="0 0 16 16"><g stroke="#806010" stroke-width="0.6"><ellipse cx="3.5" cy="5.0" rx="3.2" ry="1.3" fill="#f0d040"/><ellipse cx="3.5" cy="7.3" rx="3.2" ry="1.3" fill="#f0d040"/><ellipse cx="3.5" cy="9.6" rx="3.2" ry="1.3" fill="#f0d040"/><ellipse cx="3.5" cy="11.899999999999999" rx="3.2" ry="1.3" fill="#f0d040"/><ellipse cx="9.5" cy="10.5" rx="3" ry="1.3" fill="#f0d040"/><ellipse cx="9.5" cy="12.8" rx="3" ry="1.3" fill="#f0d040"/></g><path d="M5 3q3-4 7 0" fill="none" stroke="#3060a0" stroke-width="1.3"/><path d="M11 1.5l2 2.5-3 0.5z" fill="#3060a0"/></svg>
<svg style="position:absolute;left:723px;top:74px;overflow:visible" width="6" height="4" viewBox="0 0 6 4"><path d="M0 0h6L3 3.5z" fill="#000"/></svg>
<svg style="position:absolute;left:745px;top:63px;overflow:visible" width="16" height="16" viewBox="0 0 16 16"><rect x="2.5" y="0.5" width="11" height="6" fill="#fafafa" stroke="#a0a0a0"/><path d="M9 4l2-2" stroke="#b0b0b0" stroke-width="0.7"/><path d="M0.5 6q0-4 3.5-4t3.5 4v3h-7z" fill="#d8a030"/><ellipse cx="4" cy="7.5" rx="2.6" ry="3" fill="#f0c8a0"/><path d="M0 14q0-3.5 3-3.5h2v3.5z" fill="#1a2a80"/><path d="M4.5 10.5l1 3 1.5-3" stroke="#30b030" stroke-width="1.1" fill="none"/><rect x="8" y="8.5" width="5.5" height="5.5" fill="#ffee00"/><path d="M9 11.5l1.5 1.5 2.5-3.5" stroke="#e01010" stroke-width="1.4" fill="none"/></svg>
<svg style="position:absolute;left:765px;top:63px;overflow:visible" width="16" height="16" viewBox="0 0 16 16"><rect x="0.5" y="0.5" width="8.5" height="11" fill="#f4f8ff" stroke="#3a8ad0"/><rect x="1.5" y="5" width="6.5" height="2.2" fill="#80c0f0"/><circle cx="10.5" cy="2.6" r="2.1" fill="#f0b090" stroke="#903020" stroke-width="0.7"/><path d="M6.5 12q0-6.5 4-6.5t4 6.5z" fill="#2058d0"/><path d="M2 9.5h9l-1.5 3.5h-6z" fill="#404040"/><circle cx="4" cy="14" r="0.9" fill="#202020"/><circle cx="8.5" cy="14" r="0.9" fill="#202020"/></svg>
<svg style="position:absolute;left:785px;top:63px;overflow:visible" width="16" height="16" viewBox="0 0 16 16"><rect x="0" y="0" width="13.5" height="13.5" fill="#fff"/><text x="0" y="5.5" font-family="Liberation Sans" font-weight="bold" font-size="6.6" fill="#3038a8" textLength="13.5" lengthAdjust="spacingAndGlyphs">СЧЕТ</text><path d="M1 7.5h5M8 7.5h2M11 7.5h2M1 9.5h5M8 9.5h2M11 9.5h2M4 11.5h1M6 11.5h2" stroke="#c8c8d0" stroke-width="0.8"/><rect x="8" y="11" width="2.5" height="1.2" fill="#8090f0"/></svg>
<svg style="position:absolute;left:805px;top:63px;overflow:visible" width="16" height="16" viewBox="0 0 16 16"><rect x="0.5" y="0.5" width="13" height="13" fill="#fafafa" stroke="#888"/><rect x="1" y="1" width="12" height="1.8" fill="#a8a8a8"/><path d="M3 3v10M1 5h12M1 8h12M1 11h12" stroke="#d0d0d0" stroke-width="0.6"/><rect x="3" y="4.5" width="6" height="2.5" fill="none" stroke="#e02020" stroke-width="1.2"/><path d="M7 7l6.5 6.5" stroke="#20a030" stroke-width="2.6"/><path d="M6.5 6.5l1.5 1.5" stroke="#f0e040" stroke-width="2"/></svg>
<svg style="position:absolute;left:825px;top:63px;overflow:visible" width="16" height="16" viewBox="0 0 16 16"><rect x="0" y="6.5" width="6.5" height="6" fill="#3090d0"/><rect x="0" y="6.5" width="6.5" height="2" fill="#60c0e0"/><rect x="5.5" y="5" width="7.5" height="7" fill="#30b040"/><rect x="5.5" y="5" width="7.5" height="2" fill="#60d060"/><rect x="3" y="0.5" width="6" height="6" fill="#e04040"/><path d="M6 0.5v6M3 3h6" stroke="#f0c0a0" stroke-width="0.7"/><path d="M1 9.5h4M7 9h5" stroke="#e0e060" stroke-width="0.7"/></svg>
<svg style="position:absolute;left:848px;top:64px;overflow:visible" width="16" height="16" viewBox="0 0 16 16"><path d="M1.5 3.5v7a2 2 0 0 0 4 0v-8a1.5 1.5 0 0 0-3 0v7" fill="none" stroke="#b8bcc0" stroke-width="1.1"/></svg>
<svg style="position:absolute;left:866px;top:63px;overflow:visible" width="16" height="16" viewBox="0 0 16 16"><path d="M0.5 0.5h8l1.5 1.5v11.5h-9.5z" fill="#fafcff" stroke="#c0c8d0"/><path d="M2 2.5h4" stroke="#90c040" stroke-width="0.9"/><path d="M2 4.5h2.5M5.5 4.5h3M2 6.5h6M2 8.5h5" stroke="#40b8c8" stroke-width="0.9"/><path d="M2 4.5h2" stroke="#f0a0a0" stroke-width="0.9"/><path d="M5.5 10l2 3.5 4.5-7.5" stroke="#2050b0" stroke-width="1.5" fill="none"/></svg>
<svg style="position:absolute;left:884px;top:74px;overflow:visible" width="6" height="4" viewBox="0 0 6 4"><path d="M0 0h6L3 3.5z" fill="#000"/></svg>
<svg style="position:absolute;left:905px;top:63px;overflow:visible" width="16" height="16" viewBox="0 0 16 16"><path d="M0.5 0.5h8l2.5 2.5v9.5h-10.5z" fill="#fafafa" stroke="#d0d0d0"/><path d="M0.5 12.5h9" stroke="#505050"/><path d="M6.5 4.5H2.5l2.2 3-2.2 3h4" fill="none" stroke="#303030" stroke-width="1.2"/><path d="M7.0 9.5q0-4.5 3.5-4.5t3.5 4.5z" fill="#2050e0"/><circle cx="10.5" cy="2.5" r="2" fill="#f0b890"/><path d="M8.5 2.5q0-2.4 2-2.4t2 2.4" fill="none" stroke="#8a3020" stroke-width="0.9"/><rect x="8" y="8.5" width="5.5" height="5" fill="#f01010"/></svg>
<svg style="position:absolute;left:925px;top:63px;overflow:visible" width="16" height="16" viewBox="0 0 16 16"><path d="M0.5 0.5h8l2.5 2.5v9.5h-10.5z" fill="#fafafa" stroke="#d0d0d0"/><path d="M0.5 12.5h9" stroke="#505050"/><path d="M6.5 4.5H2.5l2.2 3-2.2 3h4" fill="none" stroke="#303030" stroke-width="1.2"/><path d="M7.0 9.5q0-4.5 3.5-4.5t3.5 4.5z" fill="#f02020"/><circle cx="10.5" cy="2.5" r="2" fill="#f0b890"/><path d="M8.5 2.5q0-2.4 2-2.4t2 2.4" fill="none" stroke="#8a3020" stroke-width="0.9"/><rect x="8" y="8.5" width="5.5" height="5" fill="#1020e0"/></svg>
<svg style="position:absolute;left:945px;top:63px;overflow:visible" width="16" height="16" viewBox="0 0 16 16"><path d="M0.5 0.5h8l2.5 2.5v9.5h-10.5z" fill="#fafafa" stroke="#d0d0d0"/><path d="M0.5 12.5h9" stroke="#505050"/><path d="M6.5 4.5H2.5l2.2 3-2.2 3h4" fill="none" stroke="#303030" stroke-width="1.2"/><path d="M8.0 11q0-4.5 3.5-4.5t3.5 4.5z" fill="#3070f0"/><circle cx="11.5" cy="4" r="2" fill="#f0b890"/><path d="M9.5 4q0-2.4 2-2.4t2 2.4" fill="none" stroke="#8a3020" stroke-width="0.9"/><path d="M4.0 14q0-4.5 3.5-4.5t3.5 4.5z" fill="#f01818"/><circle cx="7.5" cy="7" r="2" fill="#f0b890"/><path d="M5.5 7q0-2.4 2-2.4t2 2.4" fill="none" stroke="#8a3020" stroke-width="0.9"/></svg>
<svg style="position:absolute;left:965px;top:63px;overflow:visible" width="16" height="16" viewBox="0 0 16 16"><path d="M0.5 0.5h8l2.5 2.5v9.5h-10.5z" fill="#fafafa" stroke="#d0d0d0"/><path d="M0.5 12.5h9" stroke="#505050"/><path d="M6.5 4.5H2.5l2.2 3-2.2 3h4" fill="none" stroke="#303030" stroke-width="1.2"/><rect x="8" y="2" width="5.5" height="5.5" fill="#f01010"/><path d="M8 7.5v4" stroke="#404040"/><rect x="5" y="10.5" width="9" height="3" rx="0.8" fill="#5020c0"/><rect x="5" y="10.5" width="9" height="1" fill="#8080ff" opacity="0.5"/><path d="M7 12.0h5" stroke="#f0e040" stroke-dasharray="1 1" stroke-width="0.8"/></svg>
<svg style="position:absolute;left:985px;top:63px;overflow:visible" width="16" height="16" viewBox="0 0 16 16"><path d="M0.5 0.5h8l2.5 2.5v9.5h-10.5z" fill="#fafafa" stroke="#d0d0d0"/><path d="M0.5 12.5h9" stroke="#505050"/><path d="M6.5 4.5H2.5l2.2 3-2.2 3h4" fill="none" stroke="#303030" stroke-width="1.2"/><rect x="8.5" y="0" width="5.5" height="5.5" fill="#f01010"/><path d="M8.5 5.5v4" stroke="#404040"/><rect x="7" y="9.5" width="5.5" height="4" fill="#f09010"/><rect x="8" y="11" width="3.5" height="2" fill="#602000"/></svg>
<svg style="position:absolute;left:1005px;top:63px;overflow:visible" width="16" height="16" viewBox="0 0 16 16"><path d="M0.5 0.5h8l2.5 2.5v9.5h-10.5z" fill="#fafafa" stroke="#d0d0d0"/><path d="M0.5 12.5h9" stroke="#505050"/><path d="M6.5 4.5H2.5l2.2 3-2.2 3h4" fill="none" stroke="#303030" stroke-width="1.2"/><rect x="8.5" y="3" width="5.5" height="5.5" fill="#f01010"/><path d="M8.5 2v8" stroke="#404040"/><rect x="6" y="10.5" width="8" height="3" rx="0.8" fill="#2060f0"/><rect x="6" y="10.5" width="8" height="1" fill="#8080ff" opacity="0.5"/><path d="M8 12.0h4" stroke="#ffffff" stroke-dasharray="1 1" stroke-width="0.8"/></svg>
<svg style="position:absolute;left:1025px;top:63px;overflow:visible" width="16" height="16" viewBox="0 0 16 16"><path d="M0.5 0.5h8l2.5 2.5v9.5h-10.5z" fill="#fafafa" stroke="#d0d0d0"/><path d="M0.5 12.5h9" stroke="#505050"/><path d="M6.5 4.5H2.5l2.2 3-2.2 3h4" fill="none" stroke="#303030" stroke-width="1.2"/><rect x="6.5" y="3.5" width="6" height="10" fill="#c8c8c8" stroke="#707070"/><path d="M6.5 6.5h6M6.5 9h6M6.5 11.5h6" stroke="#f0f0f0"/></svg>
<svg style="position:absolute;left:1045px;top:63px;overflow:visible" width="16" height="16" viewBox="0 0 16 16"><path d="M0.5 0.5h8l2.5 2.5v9.5h-10.5z" fill="#fafafa" stroke="#d0d0d0"/><path d="M0.5 12.5h9" stroke="#505050"/><path d="M6.5 4.5H2.5l2.2 3-2.2 3h4" fill="none" stroke="#303030" stroke-width="1.2"/><path d="M6.5 8.5l2.5 2.5 5-5" stroke="#20b030" stroke-width="2.4" fill="none"/></svg>
<div style="left:1065px;top:63px;width:1px;height:16px;background:#cdc8bb;"></div>
<div style="left:1066px;top:63px;width:1px;height:16px;background:#fbfaf6;"></div>
<svg style="position:absolute;left:1071px;top:63px;overflow:visible" width="16" height="16" viewBox="0 0 16 16"><rect x="0.5" y="0.5" width="10.5" height="13" rx="2.2" fill="#40c840" stroke="#109020"/><rect x="1.5" y="1.5" width="8.5" height="4" rx="1.5" fill="#70e070"/><path d="M3.5 3v8M3.5 7h3M3.5 10.5h3" stroke="#2060a0" stroke-width="0.9" fill="none"/><rect x="6" y="6" width="3" height="2" fill="#80b0e0"/><rect x="6" y="9.5" width="3" height="2" fill="#80b0e0"/></svg>
<svg style="position:absolute;left:1089px;top:74px;overflow:visible" width="6" height="4" viewBox="0 0 6 4"><path d="M0 0h6L3 3.5z" fill="#000"/></svg>
<div style="left:100px;top:82px;width:1000px;height:1px;background:#6d6d6d;"></div>
<div style="left:100px;top:82px;width:2px;height:605px;background:#737373;"></div>
<div style="left:1098px;top:82px;width:1px;height:605px;background:#dcd8d0;"></div>
<div style="left:1099px;top:82px;width:1px;height:605px;background:#ffffff;"></div>
<div style="left:102px;top:83px;width:996px;height:16px;background:#5a7bb5;"></div>
<svg style="position:absolute;left:103px;top:84px;overflow:visible" width="16" height="16" viewBox="0 0 16 16"><path d="M6 3l7.5 2.5-3.5 10-7-2.5z" fill="#ececec" stroke="#a8a8a8" stroke-width="0.8"/><rect x="0.5" y="0.5" width="8" height="10.5" fill="#ffffff" stroke="#9a9a9a"/><rect x="2" y="2" width="2" height="1.2" fill="#3030c8"/><rect x="5" y="2" width="2" height="1.2" fill="#3030c8"/><path d="M2 5.5h5M2 7.5h5M2 9.5h5M3.5 4.5v5.5M5.5 4.5v5.5" stroke="#a0a0a0" stroke-width="1"/></svg>
<span class="t" style="left:120.6px;top:85.69px;font-size:11px;font-weight:bold;color:#fff;transform:scaleX(0.979);">Реестр отгрузок</span>
<svg style="position:absolute;left:1040px;top:82px;overflow:visible" width="60" height="18" viewBox="0 0 60 18"><rect x="11" y="12" width="7" height="2" fill="#fff"/><rect x="30.5" y="4.5" width="6" height="6" fill="none" stroke="#fff"/><rect x="30" y="4" width="7" height="2" fill="#fff"/><rect x="27.5" y="7.5" width="6" height="6" fill="#5a7bb5" stroke="#fff"/><rect x="27" y="7" width="7" height="2" fill="#fff"/><path d="M46.5 5.5l7 7M53.5 5.5l-7 7" stroke="#fff" stroke-width="1.9"/></svg>
<div style="left:102px;top:100px;width:996px;height:21px;background:#ede6dc;"></div>
<span class="t" style="left:105.6px;top:104.69px;font-size:11px;color:#000;transform:scaleX(0.896);">Действия</span>
<svg style="position:absolute;left:152px;top:110px;overflow:visible" width="5" height="3" viewBox="0 0 5 3"><path d="M0 0h5L2.5 3z" fill="#000"/></svg>
<div style="left:162px;top:103px;width:1px;height:15px;background:#cdc8bb;"></div>
<div style="left:163px;top:103px;width:1px;height:15px;background:#fbfaf6;"></div>
<svg style="position:absolute;left:170px;top:105px;overflow:visible" width="7" height="11" viewBox="0 0 7 11"><path d="M0 0l7 5.5L0 11z" fill="#10a020"/></svg>
<span class="t" style="left:182.7px;top:104.69px;font-size:11px;font-weight:bold;color:#000;transform:scaleX(0.905);">Сформировать</span>
<div style="left:265px;top:103px;width:1px;height:15px;background:#cdc8bb;"></div>
<div style="left:266px;top:103px;width:1px;height:15px;background:#fbfaf6;"></div>
<svg style="position:absolute;left:270px;top:103px;overflow:visible" width="16" height="16" viewBox="0 0 16 16"><rect x="0" y="1" width="9" height="11" fill="#d4d8dc"/><path d="M6 12V5M3 7l3-4 3 4" stroke="#a8b0b8" stroke-width="1.5" fill="none"/><path d="M6 15l4-4 4 4z" fill="#c8c8b8"/></svg>
<svg style="position:absolute;left:290px;top:103px;overflow:visible" width="16" height="16" viewBox="0 0 16 16"><rect x="0" y="1" width="9" height="11" fill="#d4d8dc"/><path d="M10 2v9M7 9l3 3 3-3" stroke="#a8b0b8" stroke-width="1.5" fill="none"/><path d="M6 15l4-4 4 4z" fill="#c8c8b8"/></svg>
<div style="left:309px;top:103px;width:1px;height:15px;background:#cdc8bb;"></div>
<div style="left:310px;top:103px;width:1px;height:15px;background:#fbfaf6;"></div>
<div style="left:314px;top:103px;width:14px;height:14px;background:#ffffd8;border:1px solid #c0b890;border-radius:3px;"></div>
<span class="t" style="left:317.5px;top:104.84px;font-size:12px;font-weight:bold;color:#1020c0;">?</span>
<div style="left:102px;top:121px;width:996px;height:1px;background:#cbc4b6;"></div>
<div style="left:102px;top:122px;width:996px;height:565px;background:#fffbf5;"></div>
<span class="t" style="left:108.5px;top:130.69px;font-size:11px;color:#000;transform:scaleX(0.855);">Период отчета с</span>
<div style="left:188px;top:128px;width:100px;height:17px;background:#fff;border:1px solid #aaa590;"></div>
<span class="t" style="left:191px;top:131.19px;font-size:11px;color:#000;transform:scaleX(0.836);">01.03.2010</span>
<div style="left:274px;top:129px;width:13px;height:15px;background:#ede6dc;border-left:1px solid #aaa590;"></div>
<svg style="position:absolute;left:277px;top:133px;overflow:visible" width="16" height="16" viewBox="0 0 16 16"><rect x="0" y="0" width="8" height="7" fill="#202020"/><path d="M1 2.5h6M1 4.5h6M2.5 2v5M4.5 2v5" stroke="#d0d0d0" stroke-width="0.8"/></svg>
<span class="t" style="left:303.7px;top:130.69px;font-size:11px;color:#000;transform:scaleX(0.829);">по</span>
<div style="left:320px;top:128px;width:101px;height:17px;background:#fff;border:1px solid #aaa590;"></div>
<span class="t" style="left:323.6px;top:131.19px;font-size:11px;color:#000;transform:scaleX(0.836);">09.03.2010</span>
<div style="left:407px;top:129px;width:13px;height:15px;background:#ede6dc;border-left:1px solid #aaa590;"></div>
<svg style="position:absolute;left:410px;top:133px;overflow:visible" width="16" height="16" viewBox="0 0 16 16"><rect x="0" y="0" width="8" height="7" fill="#202020"/><path d="M1 2.5h6M1 4.5h6M2.5 2v5M4.5 2v5" stroke="#d0d0d0" stroke-width="0.8"/></svg>
<span class="t" style="left:430px;top:130.69px;font-size:11px;color:#000;transform:scaleX(0.858);">Вид отчета:</span>
<div style="left:521px;top:128px;width:222px;height:17px;background:#fff;border:1px solid #aaa590;"></div>
<span class="t" style="left:524px;top:130.69px;font-size:11px;color:#000;transform:scaleX(0.873);">Реализация по покупателям</span>
<div style="left:728px;top:129px;width:14px;height:15px;background:#ede6dc;border-left:1px solid #aaa590;"></div>
<svg style="position:absolute;left:732px;top:134px;overflow:visible" width="7" height="4" viewBox="0 0 7 4"><path d="M0 0h7L3.5 4z" fill="#000"/></svg>
<span class="t" style="left:110px;top:151.69px;font-size:11px;color:#000;transform:scaleX(0.857);">Организация:</span>
<div style="left:188px;top:149px;width:233px;height:17px;background:#fff;border:1px solid #aaa590;"></div>
<div style="left:407px;top:150px;width:13px;height:15px;background:#ede6dc;border-left:1px solid #aaa590;"></div>
<span class="t" style="left:410.5px;top:151.69px;font-size:11px;color:#000;transform:scaleX(0.8);">...</span>
<span class="t" style="left:190.8px;top:152.19px;font-size:11px;color:#333;transform:scaleX(0.731);">ООО</span>
<div style="left:190px;top:157px;width:26px;height:1px;background:#000;"></div>
<div style="left:209px;top:149px;width:120px;height:17px;overflow:hidden">
<svg style="position:absolute;left:0;top:0" width="120" height="17" viewBox="0 0 120 17"><g transform="translate(2,0.6) scale(0.64,0.62)"><path d="M5,7.5 L18,7.3 L30,7 L36,6.5 L38.5,4.2 L40,6.5 L42,8 L60,8.7 L90,8.7 L128,9 L130,7.5 L144,7.3 L146,6.3 L158,6.3 L159,8 L153,9.5 L151,11 L150,14.5 L141,17.5 L131,19.5 L129,21 L110,21.3 L85,21.3 L70,20.3 L60,20.5 L45,19.3 L25,17.8 L16,20.3 L8,18.7 L6,16.5 L6,11 L8,9Z" fill="#000"/><path d="M0 10.5H9M9.5 10v8M150 12.5h15M149 18.5h19M134 21.5h16M80 21.6h40M25 7.2h25M120 6.8h30" stroke="#000" stroke-width="1.1" fill="none"/><rect x="53.7" y="10.9" width="2" height="1" fill="#fff"/><rect x="120.9" y="10.4" width="8" height="1" fill="#fff"/><rect x="132.8" y="11.5" width="2" height="1" fill="#888"/><rect x="66.5" y="11.8" width="8" height="1" fill="#888"/><rect x="18.0" y="14.9" width="3" height="1" fill="#fff"/><rect x="87.9" y="13.3" width="3" height="1" fill="#fff"/><rect x="85.1" y="10.8" width="6" height="1" fill="#fff"/><rect x="83.0" y="14.9" width="8" height="1" fill="#fff"/><rect x="23.9" y="14.9" width="3" height="1" fill="#ccc"/><rect x="23.2" y="16.3" width="8" height="1" fill="#fff"/><rect x="93.6" y="14.2" width="8" height="1" fill="#888"/><rect x="114.9" y="13.9" width="6" height="1" fill="#ccc"/><rect x="50.5" y="17.0" width="3" height="1" fill="#fff"/><rect x="87.5" y="14.5" width="4" height="1" fill="#888"/><rect x="48.9" y="18.8" width="2" height="1" fill="#888"/><rect x="32.3" y="12.7" width="6" height="1" fill="#888"/><rect x="15.3" y="15.8" width="8" height="1" fill="#ccc"/><rect x="55.9" y="12.8" width="6" height="1" fill="#888"/><rect x="19.3" y="10.4" width="4" height="1" fill="#888"/><rect x="104.1" y="10.1" width="4" height="1" fill="#888"/><rect x="48.4" y="13.2" width="4" height="1" fill="#fff"/><rect x="137.0" y="12.9" width="8" height="1" fill="#fff"/><rect x="76.6" y="11.6" width="4" height="1" fill="#fff"/><rect x="109.7" y="13.3" width="6" height="1" fill="#fff"/><rect x="32.5" y="13.3" width="4" height="1" fill="#fff"/><rect x="120.6" y="17.7" width="4" height="1" fill="#888"/><rect x="143.2" y="16.0" width="6" height="1" fill="#fff"/><rect x="30.4" y="11.2" width="3" height="1" fill="#fff"/><rect x="11.6" y="17.4" width="3" height="1" fill="#ccc"/><rect x="48.1" y="10.9" width="8" height="1" fill="#ccc"/><rect x="92.3" y="12.5" width="3" height="1" fill="#fff"/><rect x="71.6" y="17.8" width="8" height="1" fill="#888"/><rect x="63.7" y="13.2" width="6" height="1" fill="#888"/><rect x="18.4" y="10.1" width="3" height="1" fill="#888"/></g></svg>
</div>
<span class="t" style="left:110px;top:172.69px;font-size:11px;color:#000;transform:scaleX(0.842);">Менеджер:</span>
<div style="left:188px;top:170px;width:233px;height:17px;background:#fff;border:1px solid #aaa590;"></div>
<div style="left:396px;top:171px;width:12px;height:15px;background:#ede6dc;border-left:1px solid #aaa590;"></div>
<div style="left:407px;top:171px;width:13px;height:15px;background:#ede6dc;border-left:1px solid #aaa590;"></div>
<span class="t" style="left:399px;top:172.69px;font-size:11px;color:#000;transform:scaleX(0.8);">...</span>
<svg style="position:absolute;left:411px;top:175px;overflow:visible" width="7" height="7" viewBox="0 0 7 7"><path d="M0.5 0.5l6 6M6.5 0.5l-6 6" stroke="#000" stroke-width="1.6"/></svg>
<div style="left:430px;top:171px;width:11px;height:11px;background:#fff;border:1px solid #8c8870;"></div>
<svg style="position:absolute;left:432px;top:173px;overflow:visible" width="7" height="7" viewBox="0 0 7 7"><path d="M0.5 3.5l2 2.5 4-5.5" stroke="#000" stroke-width="1.7" fill="none"/></svg>
<div style="left:443px;top:170px;width:134px;height:13px;border:1px dotted #404040;"></div>
<span class="t" style="left:444.6px;top:171.69px;font-size:11px;color:#000;transform:scaleX(0.879);">Детализация по менеджерам</span>
<div style="left:109px;top:193px;width:982px;height:485px;border-top:2px solid #cdc8b8;border-left:1px solid #d6d1c2;border-right:1px solid #d6d1c2;border-bottom:1px solid #a39d88;background:#fff;"></div>
<div style="left:110px;top:195px;width:35px;height:470px;background:#fffbf5;"></div>
<div style="left:145px;top:195px;width:1px;height:87px;background:#202020;"></div>
<div style="left:1078px;top:195px;width:12px;height:470px;background:#fefef6;"></div>
<div style="left:1077px;top:195px;width:1px;height:470px;background:#f0efe6;"></div>
<div style="left:1079px;top:195px;width:11px;height:10px;background:#efebe2;border:1px solid #e3dfd3;border-radius:1px;"></div>
<svg style="position:absolute;left:1081px;top:197px;overflow:visible" width="7" height="5" viewBox="0 0 7 5"><path d="M0.8 4.2L3.5 1.3L6.2 4.2" stroke="#303030" stroke-width="1.4" fill="none"/></svg>
<div style="left:1079px;top:206px;width:11px;height:107px;background:linear-gradient(90deg,#ece6d9,#efe7dd 60%,#d6d1c1);border:1px solid #d6d1c1;border-radius:1px;"></div>
<div style="left:1079px;top:655px;width:10px;height:10px;background:#efebe2;border:1px solid #e3dfd3;border-radius:1px;"></div>
<svg style="position:absolute;left:1080px;top:657px;overflow:visible" width="7" height="5" viewBox="0 0 7 5"><path d="M0.8 0.8L3.5 3.7L6.2 0.8" stroke="#303030" stroke-width="1.4" fill="none"/></svg>
<div style="left:1090px;top:195px;width:1px;height:483px;background:#bdb7a6;"></div>
<div style="left:110px;top:665px;width:968px;height:1px;background:#ebe9de;"></div>
<div style="left:110px;top:666px;width:968px;height:11px;background:#fefef6;"></div>
<div style="left:110px;top:666px;width:10px;height:10px;background:#efebe2;border:1px solid #e3dfd3;border-radius:1px;"></div>
<svg style="position:absolute;left:112px;top:668px;overflow:visible" width="5" height="7" viewBox="0 0 5 7"><path d="M4.2 0.8L1.3 3.5L4.2 6.2" stroke="#303030" stroke-width="1.4" fill="none"/></svg>
<div style="left:121px;top:667px;width:834px;height:9px;background:linear-gradient(180deg,#ebe5db,#efe6dc 60%,#e3dccc);border:1px solid #d3cdbd;border-radius:1px;"></div>
<div style="left:1068px;top:666px;width:10px;height:10px;background:#efebe2;border:1px solid #e3dfd3;border-radius:1px;"></div>
<svg style="position:absolute;left:1070px;top:668px;overflow:visible" width="5" height="7" viewBox="0 0 5 7"><path d="M0.8 0.8L3.7 3.5L0.8 6.2" stroke="#303030" stroke-width="1.4" fill="none"/></svg>
<div style="left:1078px;top:666px;width:12px;height:11px;background:#d6cfbb;"></div>
<div style="left:109px;top:677px;width:982px;height:1px;background:#a39d88;"></div>
<span class="t" style="left:170.5px;top:199.65px;font-size:14px;color:#000;transform:scaleX(0.94);">ООО</span>
<svg style="position:absolute;left:200px;top:193px;overflow:visible" width="175" height="25" viewBox="0 0 175 25"><path d="M5,7.5 L18,7.3 L30,7 L36,6.5 L38.5,4.2 L40,6.5 L42,8 L60,8.7 L90,8.7 L128,9 L130,7.5 L144,7.3 L146,6.3 L158,6.3 L159,8 L153,9.5 L151,11 L150,14.5 L141,17.5 L131,19.5 L129,21 L110,21.3 L85,21.3 L70,20.3 L60,20.5 L45,19.3 L25,17.8 L16,20.3 L8,18.7 L6,16.5 L6,11 L8,9Z" fill="#000"/><path d="M0 10.5H9M9.5 10v8M150 12.5h15M149 18.5h19M134 21.5h16M80 21.6h40M25 7.2h25M120 6.8h30" stroke="#000" stroke-width="1.1" fill="none"/><rect x="42.1" y="14.7" width="4" height="1" fill="#888"/><rect x="94.5" y="10.1" width="2" height="1" fill="#888"/><rect x="45.0" y="11.7" width="6" height="1" fill="#888"/><rect x="63.6" y="17.7" width="3" height="1" fill="#fff"/><rect x="127.2" y="14.5" width="2" height="1" fill="#fff"/><rect x="31.5" y="18.6" width="2" height="1" fill="#ccc"/><rect x="115.3" y="17.3" width="4" height="1" fill="#888"/><rect x="90.3" y="18.2" width="6" height="1" fill="#888"/><rect x="63.3" y="17.1" width="6" height="1" fill="#fff"/><rect x="128.6" y="10.4" width="3" height="1" fill="#888"/><rect x="39.3" y="18.7" width="6" height="1" fill="#ccc"/><rect x="66.9" y="17.4" width="8" height="1" fill="#ccc"/><rect x="82.1" y="13.4" width="3" height="1" fill="#ccc"/><rect x="102.1" y="18.3" width="4" height="1" fill="#fff"/><rect x="104.3" y="12.6" width="8" height="1" fill="#fff"/><rect x="106.4" y="11.5" width="8" height="1" fill="#ccc"/><rect x="48.5" y="10.1" width="6" height="1" fill="#fff"/><rect x="56.5" y="10.1" width="3" height="1" fill="#fff"/><rect x="49.7" y="16.8" width="2" height="1" fill="#fff"/><rect x="91.7" y="16.7" width="6" height="1" fill="#ccc"/><rect x="84.4" y="18.3" width="4" height="1" fill="#fff"/><rect x="144.8" y="12.4" width="2" height="1" fill="#fff"/><rect x="91.0" y="9.8" width="3" height="1" fill="#888"/><rect x="49.4" y="12.0" width="2" height="1" fill="#ccc"/><rect x="52.4" y="18.6" width="6" height="1" fill="#888"/><rect x="72.2" y="14.4" width="8" height="1" fill="#fff"/><rect x="93.7" y="18.4" width="8" height="1" fill="#ccc"/><rect x="68.2" y="16.3" width="3" height="1" fill="#ccc"/><rect x="69.1" y="12.0" width="4" height="1" fill="#ccc"/><rect x="11.5" y="13.4" width="8" height="1" fill="#ccc"/><rect x="12.7" y="15.4" width="3" height="1" fill="#fff"/><rect x="95.5" y="12.7" width="4" height="1" fill="#ccc"/><rect x="92.2" y="12.1" width="6" height="1" fill="#fff"/><rect x="89.6" y="18.6" width="2" height="1" fill="#ccc"/></svg>
<span class="t" style="left:265.7px;top:219.26px;font-size:18px;font-weight:bold;color:#000;">Реестр отгрузок</span>
<span class="t" style="left:425px;top:257.69px;font-size:11px;color:#000;transform:scaleX(0.95);">с</span>
<span class="t" style="left:462px;top:258.11px;font-size:10.5px;color:#000;transform:scaleX(0.875);">01.03.2010</span>
<span class="t" style="left:545px;top:257.69px;font-size:11px;color:#000;transform:scaleX(0.95);">по</span>
<span class="t" style="left:592px;top:258.11px;font-size:10.5px;color:#000;transform:scaleX(0.875);">09.03.2010</span>
<div style="left:145px;top:282px;width:674px;height:50px;background:#b5bdbb;"></div>
<div style="left:145px;top:282px;width:674px;height:1px;background:#202020;"></div>
<div style="left:145px;top:282px;width:1px;height:50px;background:#202020;"></div>
<div style="left:432px;top:282px;width:1px;height:50px;background:#383838;"></div>
<div style="left:511px;top:282px;width:1px;height:50px;background:#383838;"></div>
<div style="left:590px;top:282px;width:1px;height:50px;background:#383838;"></div>
<div style="left:693px;top:282px;width:1px;height:50px;background:#383838;"></div>
<div style="left:818px;top:282px;width:1px;height:50px;background:#202020;"></div>
<span class="t" style="left:246px;top:299.96px;font-size:16px;color:#000;">Покупатель</span>
<span class="t" style="left:437px;top:296.11px;font-size:10.5px;font-weight:bold;color:#000;transform:scaleX(1.078);">Количество</span>
<span class="t" style="left:458px;top:309.11px;font-size:10.5px;font-weight:bold;color:#000;transform:scaleX(1.05);">штук</span>
<span class="t" style="left:540.7px;top:301.69px;font-size:11px;font-weight:bold;color:#000;">Вес</span>
<span class="t" style="left:623.7px;top:301.69px;font-size:11px;font-weight:bold;color:#000;transform:scaleX(0.976);">Сумма</span>
<span class="t" style="left:729.6px;top:300.15px;font-size:14px;font-weight:bold;color:#000;">Период</span>
<div style="left:146px;top:331px;width:672px;height:14px;background:#f8805a;"></div>
<div style="left:145px;top:331px;width:674px;height:1px;background:#202020;"></div>
<span class="t" style="left:148px;top:334.11px;font-size:10.5px;font-weight:bold;color:#000;transform:scaleX(0.92);">Итого:</span>
<span class="t r" style="right:691.5px;top:334.11px;font-size:10.5px;font-weight:bold;color:#000;">5 883</span>
<span class="t r" style="right:612.5px;top:334.11px;font-size:10.5px;font-weight:bold;color:#000;">18 899,51</span>
<span class="t r" style="right:509.5px;top:334.11px;font-size:10.5px;font-weight:bold;color:#000;">5 138 145,36</span>
<div style="left:146px;top:345px;width:672px;height:14px;background:#e788ee;"></div>
<div style="left:145px;top:345px;width:674px;height:1px;background:#383838;"></div>
<span class="t" style="left:148px;top:348.11px;font-size:10.5px;font-weight:bold;color:#000;transform:scaleX(0.92);">Казарина И.</span>
<span class="t r" style="right:691.5px;top:348.11px;font-size:10.5px;color:#000;">308</span>
<span class="t r" style="right:612.5px;top:348.11px;font-size:10.5px;color:#000;">1 264</span>
<span class="t r" style="right:509.5px;top:348.11px;font-size:10.5px;color:#000;">396 643,55</span>
<div style="left:433px;top:359px;width:385px;height:14px;background:#fdf4ee;"></div>
<div style="left:145px;top:359px;width:674px;height:1px;background:#383838;"></div>
<span class="t" style="left:148px;top:362.11px;font-size:10.5px;color:#000;">Рываева Г.А. ИП (Златоуст)</span>
<span class="t r" style="right:691.5px;top:362.11px;font-size:10.5px;color:#000;">35</span>
<span class="t r" style="right:612.5px;top:362.11px;font-size:10.5px;color:#000;">60,14</span>
<span class="t r" style="right:509.5px;top:362.11px;font-size:10.5px;color:#000;">56 995,86</span>
<span class="t r" style="right:384.5px;top:362.11px;font-size:10.5px;color:#000;">01.03.2010 9:31:23</span>
<div style="left:433px;top:373px;width:385px;height:14px;background:#fdf4ee;"></div>
<div style="left:145px;top:373px;width:674px;height:1px;background:#383838;"></div>
<span class="t" style="left:148px;top:376.11px;font-size:10.5px;color:#000;">Бурова Л.Б. ИП (Ижевск)</span>
<span class="t r" style="right:691.5px;top:376.11px;font-size:10.5px;color:#000;">45</span>
<span class="t r" style="right:612.5px;top:376.11px;font-size:10.5px;color:#000;">267,49</span>
<span class="t r" style="right:509.5px;top:376.11px;font-size:10.5px;color:#000;">32 400,9</span>
<span class="t r" style="right:384.5px;top:376.11px;font-size:10.5px;color:#000;">03.03.2010 9:13:00</span>
<div style="left:433px;top:387px;width:385px;height:14px;background:#fdf4ee;"></div>
<div style="left:145px;top:387px;width:674px;height:1px;background:#383838;"></div>
<span class="t" style="left:148px;top:390.11px;font-size:10.5px;color:#000;">Бабаевское РАЙПО (Бабаево)</span>
<span class="t r" style="right:691.5px;top:390.11px;font-size:10.5px;color:#000;">16</span>
<span class="t r" style="right:612.5px;top:390.11px;font-size:10.5px;color:#000;">28,18</span>
<span class="t r" style="right:509.5px;top:390.11px;font-size:10.5px;color:#000;">27 585,37</span>
<span class="t r" style="right:384.5px;top:390.11px;font-size:10.5px;color:#000;">03.03.2010 10:01:13</span>
<div style="left:433px;top:401px;width:385px;height:14px;background:#fdf4ee;"></div>
<div style="left:145px;top:401px;width:674px;height:1px;background:#383838;"></div>
<span class="t" style="left:148px;top:404.11px;font-size:10.5px;color:#000;">Кислов В.М. ИП (Брянск)</span>
<span class="t r" style="right:691.5px;top:404.11px;font-size:10.5px;color:#000;">4</span>
<span class="t r" style="right:612.5px;top:404.11px;font-size:10.5px;color:#000;">6,15</span>
<span class="t r" style="right:509.5px;top:404.11px;font-size:10.5px;color:#000;">794,14</span>
<span class="t r" style="right:384.5px;top:404.11px;font-size:10.5px;color:#000;">02.03.2010 9:21:21</span>
<div style="left:433px;top:415px;width:385px;height:14px;background:#fdf4ee;"></div>
<div style="left:145px;top:415px;width:674px;height:1px;background:#383838;"></div>
<span class="t" style="left:148px;top:418.11px;font-size:10.5px;color:#000;">Кислов В.М. ИП (Брянск)</span>
<span class="t r" style="right:691.5px;top:418.11px;font-size:10.5px;color:#000;">71</span>
<span class="t r" style="right:612.5px;top:418.11px;font-size:10.5px;color:#000;">209,89</span>
<span class="t r" style="right:509.5px;top:418.11px;font-size:10.5px;color:#000;">20 176,45</span>
<span class="t r" style="right:384.5px;top:418.11px;font-size:10.5px;color:#000;">02.03.2010 9:22:52</span>
<div style="left:433px;top:429px;width:385px;height:14px;background:#fdf4ee;"></div>
<div style="left:145px;top:429px;width:674px;height:1px;background:#383838;"></div>
<span class="t" style="left:148px;top:432.11px;font-size:10.5px;color:#000;">Золотой Орел Плюс ООО (Брянск)</span>
<span class="t r" style="right:691.5px;top:432.11px;font-size:10.5px;color:#000;">20</span>
<span class="t r" style="right:612.5px;top:432.11px;font-size:10.5px;color:#000;">34,81</span>
<span class="t r" style="right:509.5px;top:432.11px;font-size:10.5px;color:#000;">32 365</span>
<span class="t r" style="right:384.5px;top:432.11px;font-size:10.5px;color:#000;">04.03.2010 8:05:18</span>
<div style="left:433px;top:443px;width:385px;height:13px;background:#fdf4ee;"></div>
<div style="left:145px;top:443px;width:674px;height:1px;background:#383838;"></div>
<span class="t" style="left:148px;top:445.11px;font-size:10.5px;color:#000;">Кислов В.М. ИП (Брянск)</span>
<span class="t r" style="right:691.5px;top:445.11px;font-size:10.5px;color:#000;">34</span>
<span class="t r" style="right:612.5px;top:445.11px;font-size:10.5px;color:#000;">172,88</span>
<span class="t r" style="right:509.5px;top:445.11px;font-size:10.5px;color:#000;">29 613,6</span>
<span class="t r" style="right:384.5px;top:445.11px;font-size:10.5px;color:#000;">02.03.2010 9:21:52</span>
<div style="left:433px;top:456px;width:385px;height:14px;background:#fdf4ee;"></div>
<div style="left:145px;top:456px;width:674px;height:1px;background:#383838;"></div>
<span class="t" style="left:148px;top:459.11px;font-size:10.5px;color:#000;">Золотой Орел Плюс ООО (Брянск)</span>
<span class="t r" style="right:691.5px;top:459.11px;font-size:10.5px;color:#000;">2</span>
<span class="t r" style="right:612.5px;top:459.11px;font-size:10.5px;color:#000;">2,56</span>
<span class="t r" style="right:509.5px;top:459.11px;font-size:10.5px;color:#000;">0,02</span>
<span class="t r" style="right:384.5px;top:459.11px;font-size:10.5px;color:#000;">04.03.2010 8:05:25</span>
<div style="left:433px;top:470px;width:385px;height:14px;background:#fdf4ee;"></div>
<div style="left:145px;top:470px;width:674px;height:1px;background:#383838;"></div>
<span class="t" style="left:148px;top:473.11px;font-size:10.5px;color:#000;">Золотой Орел Плюс ООО (Брянск)</span>
<span class="t r" style="right:691.5px;top:473.11px;font-size:10.5px;color:#000;">17</span>
<span class="t r" style="right:612.5px;top:473.11px;font-size:10.5px;color:#000;">308,46</span>
<span class="t r" style="right:509.5px;top:473.11px;font-size:10.5px;color:#000;">22 944,68</span>
<span class="t r" style="right:384.5px;top:473.11px;font-size:10.5px;color:#000;">04.03.2010 8:05:10</span>
<div style="left:433px;top:484px;width:385px;height:14px;background:#fdf4ee;"></div>
<div style="left:145px;top:484px;width:674px;height:1px;background:#383838;"></div>
<span class="t" style="left:148px;top:487.11px;font-size:10.5px;color:#000;">Кислов В.М. ИП (Брянск)</span>
<span class="t r" style="right:691.5px;top:487.11px;font-size:10.5px;color:#000;">17</span>
<span class="t r" style="right:612.5px;top:487.11px;font-size:10.5px;color:#000;">44,64</span>
<span class="t r" style="right:509.5px;top:487.11px;font-size:10.5px;color:#000;">42 158,77</span>
<span class="t r" style="right:384.5px;top:487.11px;font-size:10.5px;color:#000;">02.03.2010 9:20:20</span>
<div style="left:433px;top:498px;width:385px;height:14px;background:#fdf4ee;"></div>
<div style="left:145px;top:498px;width:674px;height:1px;background:#383838;"></div>
<span class="t" style="left:148px;top:501.11px;font-size:10.5px;color:#000;">Кислов В.М. ИП (Брянск)</span>
<span class="t r" style="right:691.5px;top:501.11px;font-size:10.5px;color:#000;">5</span>
<span class="t r" style="right:612.5px;top:501.11px;font-size:10.5px;color:#000;">21,29</span>
<span class="t r" style="right:509.5px;top:501.11px;font-size:10.5px;color:#000;">20 841,48</span>
<span class="t r" style="right:384.5px;top:501.11px;font-size:10.5px;color:#000;">02.03.2010 9:19:44</span>
<div style="left:433px;top:512px;width:385px;height:14px;background:#fdf4ee;"></div>
<div style="left:145px;top:512px;width:674px;height:1px;background:#383838;"></div>
<span class="t" style="left:148px;top:515.11px;font-size:10.5px;color:#000;">Рываева Г.А. ИП (Златоуст)</span>
<span class="t r" style="right:691.5px;top:515.11px;font-size:10.5px;color:#000;">3</span>
<span class="t r" style="right:612.5px;top:515.11px;font-size:10.5px;color:#000;">3,44</span>
<span class="t r" style="right:509.5px;top:515.11px;font-size:10.5px;color:#000;">2 397,84</span>
<span class="t r" style="right:384.5px;top:515.11px;font-size:10.5px;color:#000;">01.03.2010 9:31:07</span>
<div style="left:433px;top:526px;width:385px;height:14px;background:#fdf4ee;"></div>
<div style="left:145px;top:526px;width:674px;height:1px;background:#383838;"></div>
<span class="t" style="left:148px;top:529.11px;font-size:10.5px;color:#000;">Бабаевское РАЙПО (Бабаево)</span>
<span class="t r" style="right:691.5px;top:529.11px;font-size:10.5px;color:#000;">39</span>
<span class="t r" style="right:612.5px;top:529.11px;font-size:10.5px;color:#000;">104,07</span>
<span class="t r" style="right:509.5px;top:529.11px;font-size:10.5px;color:#000;">108 369,44</span>
<span class="t r" style="right:384.5px;top:529.11px;font-size:10.5px;color:#000;">03.03.2010 9:52:25</span>
<div style="left:146px;top:540px;width:672px;height:14px;background:#e788ee;"></div>
<div style="left:145px;top:540px;width:674px;height:1px;background:#383838;"></div>
<span class="t" style="left:148px;top:543.11px;font-size:10.5px;font-weight:bold;color:#000;transform:scaleX(0.92);">Курепина О.</span>
<span class="t r" style="right:691.5px;top:543.11px;font-size:10.5px;color:#000;">508</span>
<span class="t r" style="right:612.5px;top:543.11px;font-size:10.5px;color:#000;">1 780,48</span>
<span class="t r" style="right:509.5px;top:543.11px;font-size:10.5px;color:#000;">487 830,65</span>
<div style="left:433px;top:554px;width:385px;height:14px;background:#fdf4ee;"></div>
<div style="left:145px;top:554px;width:674px;height:1px;background:#383838;"></div>
<span class="t" style="left:148px;top:557.11px;font-size:10.5px;color:#000;">Малахит ООО (Воткинск)</span>
<span class="t r" style="right:691.5px;top:557.11px;font-size:10.5px;color:#000;">80</span>
<span class="t r" style="right:612.5px;top:557.11px;font-size:10.5px;color:#000;">281,81</span>
<span class="t r" style="right:509.5px;top:557.11px;font-size:10.5px;color:#000;">40 835,33</span>
<span class="t r" style="right:384.5px;top:557.11px;font-size:10.5px;color:#000;">01.03.2010 12:25:24</span>
<div style="left:433px;top:568px;width:385px;height:14px;background:#fdf4ee;"></div>
<div style="left:145px;top:568px;width:674px;height:1px;background:#383838;"></div>
<span class="t" style="left:148px;top:571.11px;font-size:10.5px;color:#000;">Малахит ООО (Воткинск)</span>
<span class="t r" style="right:691.5px;top:571.11px;font-size:10.5px;color:#000;">65</span>
<span class="t r" style="right:612.5px;top:571.11px;font-size:10.5px;color:#000;">114,5</span>
<span class="t r" style="right:509.5px;top:571.11px;font-size:10.5px;color:#000;">117 210,78</span>
<span class="t r" style="right:384.5px;top:571.11px;font-size:10.5px;color:#000;">01.03.2010 12:28:41</span>
<div style="left:433px;top:582px;width:385px;height:13px;background:#fdf4ee;"></div>
<div style="left:145px;top:582px;width:674px;height:1px;background:#383838;"></div>
<span class="t" style="left:148px;top:584.11px;font-size:10.5px;color:#000;">Яшма ООО (Калуга)</span>
<span class="t r" style="right:691.5px;top:584.11px;font-size:10.5px;color:#000;">85</span>
<span class="t r" style="right:612.5px;top:584.11px;font-size:10.5px;color:#000;">121,18</span>
<span class="t r" style="right:509.5px;top:584.11px;font-size:10.5px;color:#000;">120 059,9</span>
<span class="t r" style="right:384.5px;top:584.11px;font-size:10.5px;color:#000;">02.03.2010 18:08:49</span>
<div style="left:433px;top:595px;width:385px;height:14px;background:#fdf4ee;"></div>
<div style="left:145px;top:595px;width:674px;height:1px;background:#383838;"></div>
<span class="t" style="left:148px;top:598.11px;font-size:10.5px;color:#000;">Яшма ООО (Калуга)</span>
<span class="t r" style="right:691.5px;top:598.11px;font-size:10.5px;color:#000;">16</span>
<span class="t r" style="right:612.5px;top:598.11px;font-size:10.5px;color:#000;">26,55</span>
<span class="t r" style="right:509.5px;top:598.11px;font-size:10.5px;color:#000;">27 466,12</span>
<span class="t r" style="right:384.5px;top:598.11px;font-size:10.5px;color:#000;">02.03.2010 18:08:19</span>
<div style="left:433px;top:609px;width:385px;height:14px;background:#fdf4ee;"></div>
<div style="left:145px;top:609px;width:674px;height:1px;background:#383838;"></div>
<span class="t" style="left:148px;top:612.11px;font-size:10.5px;color:#000;">Яшма ООО (Калуга)</span>
<span class="t r" style="right:691.5px;top:612.11px;font-size:10.5px;color:#000;">135</span>
<span class="t r" style="right:612.5px;top:612.11px;font-size:10.5px;color:#000;">561,08</span>
<span class="t r" style="right:509.5px;top:612.11px;font-size:10.5px;color:#000;">44 446,84</span>
<span class="t r" style="right:384.5px;top:612.11px;font-size:10.5px;color:#000;">02.03.2010 18:07:42</span>
<div style="left:433px;top:623px;width:385px;height:14px;background:#fdf4ee;"></div>
<div style="left:145px;top:623px;width:674px;height:1px;background:#383838;"></div>
<span class="t" style="left:148px;top:626.11px;font-size:10.5px;color:#000;">Мингазова А.Н. ИП (Аша)</span>
<span class="t r" style="right:691.5px;top:626.11px;font-size:10.5px;color:#000;">71</span>
<span class="t r" style="right:612.5px;top:626.11px;font-size:10.5px;color:#000;">396,39</span>
<span class="t r" style="right:509.5px;top:626.11px;font-size:10.5px;color:#000;">32 531,7</span>
<span class="t r" style="right:384.5px;top:626.11px;font-size:10.5px;color:#000;">04.03.2010 10:00:07</span>
<div style="left:433px;top:637px;width:385px;height:14px;background:#fdf4ee;"></div>
<div style="left:145px;top:637px;width:674px;height:1px;background:#383838;"></div>
<span class="t" style="left:148px;top:640.11px;font-size:10.5px;color:#000;">Барандычева Н.В. ИП (Москва)</span>
<span class="t r" style="right:691.5px;top:640.11px;font-size:10.5px;color:#000;">36</span>
<span class="t r" style="right:612.5px;top:640.11px;font-size:10.5px;color:#000;">76,86</span>
<span class="t r" style="right:509.5px;top:640.11px;font-size:10.5px;color:#000;">73 017</span>
<span class="t r" style="right:384.5px;top:640.11px;font-size:10.5px;color:#000;">04.03.2010 10:24:56</span>
<div style="left:433px;top:651px;width:385px;height:14px;background:#fdf4ee;"></div>
<div style="left:145px;top:651px;width:674px;height:1px;background:#383838;"></div>
<span class="t" style="left:148px;top:654.11px;font-size:10.5px;color:#000;">Барандычева Н.В. ИП (Москва)</span>
<span class="t r" style="right:691.5px;top:654.11px;font-size:10.5px;color:#000;">8</span>
<span class="t r" style="right:612.5px;top:654.11px;font-size:10.5px;color:#000;">166,94</span>
<span class="t r" style="right:509.5px;top:654.11px;font-size:10.5px;color:#000;">10 525</span>
<span class="t r" style="right:384.5px;top:654.11px;font-size:10.5px;color:#000;">04.03.2010 12:27:45</span>
<div style="left:145px;top:331px;width:1px;height:334px;background:#202020;"></div>
<div style="left:432px;top:331px;width:1px;height:334px;background:#383838;"></div>
<div style="left:511px;top:331px;width:1px;height:334px;background:#383838;"></div>
<div style="left:590px;top:331px;width:1px;height:334px;background:#383838;"></div>
<div style="left:693px;top:331px;width:1px;height:334px;background:#383838;"></div>
<div style="left:818px;top:331px;width:1px;height:334px;background:#383838;"></div>
<div style="left:112px;top:334px;width:10px;height:10px;background:#fffdf8;border:1px solid #2a2a2a;border-radius:2px;"></div>
<div style="left:114px;top:338px;width:6px;height:2px;background:#7a7a7a;"></div>
<div style="left:117px;top:344px;width:1px;height:321px;background:#6e6e6e;"></div>
<div style="left:123px;top:348px;width:10px;height:10px;background:#fffdf8;border:1px solid #2a2a2a;border-radius:2px;"></div>
<div style="left:125px;top:352px;width:6px;height:2px;background:#7a7a7a;"></div>
<div style="left:128px;top:358px;width:1px;height:182px;background:#6e6e6e;"></div>
<div style="left:128px;top:540px;width:3px;height:1px;background:#6e6e6e;"></div>
<div style="left:123px;top:542px;width:10px;height:10px;background:#fffdf8;border:1px solid #2a2a2a;border-radius:2px;"></div>
<div style="left:125px;top:546px;width:6px;height:2px;background:#7a7a7a;"></div>
<div style="left:128px;top:552px;width:1px;height:113px;background:#6e6e6e;"></div>
<div style="left:102px;top:685px;width:996px;height:1px;background:#e3e0d8;"></div>
<div style="left:100px;top:686px;width:1000px;height:20px;background:#ede6dc;"></div>
<div style="left:101px;top:687px;width:149px;height:18px;background:#a4a2a0;border:1px solid #d2c9b3;"></div>
<div style="left:250px;top:687px;width:151px;height:18px;background:#a4a2a0;border:1px solid #d2c9b3;"></div>
<div style="left:401px;top:687px;width:150px;height:18px;background:#a4a2a0;border:1px solid #d2c9b3;"></div>
<div style="left:551px;top:687px;width:150px;height:18px;background:#5a7bb5;border:1px solid #c9c4b5;"></div>
<svg style="position:absolute;left:103px;top:690px;overflow:visible" width="16" height="16" viewBox="0 0 16 16"><rect x="0.5" y="6.5" width="12" height="6" fill="#50c0e0" stroke="#2080c0"/><path d="M3 8l3.5 3L10 8z" fill="#0020a0"/><path d="M6.5 1v7" stroke="#202020" stroke-dasharray="1.5 1"/><path d="M9.5 1l3 3-3 3-3-3z" fill="#f8f080" stroke="#c0c040" stroke-width="0.8"/></svg>
<span class="t" style="left:117.3px;top:690.69px;font-size:11px;color:#d6d3cf;transform:scaleX(0.859);">Панель функций</span>
<svg style="position:absolute;left:253px;top:689px;overflow:visible" width="16" height="16" viewBox="0 0 16 16"><path d="M6 3l7.5 2.5-3.5 10-7-2.5z" fill="#ececec" stroke="#a8a8a8" stroke-width="0.8"/><rect x="0.5" y="0.5" width="8" height="10.5" fill="#ffffff" stroke="#9a9a9a"/><rect x="2" y="2" width="2" height="1.2" fill="#3030c8"/><rect x="5" y="2" width="2" height="1.2" fill="#3030c8"/><path d="M2 5.5h5M2 7.5h5M2 9.5h5M3.5 4.5v5.5M5.5 4.5v5.5" stroke="#a0a0a0" stroke-width="1"/></svg>
<span class="t" style="left:267.7px;top:690.69px;font-size:11px;color:#d6d3cf;transform:scaleX(0.869);">Расчеты с покупателями п...</span>
<svg style="position:absolute;left:404px;top:690px;overflow:visible" width="16" height="16" viewBox="0 0 16 16"><path d="M0.5 0.5h7l2 2v10h-9z" fill="#fff" stroke="#c0c8d8"/><text x="1" y="11" font-family="Liberation Sans" font-size="10" fill="#2040e0">Σ</text></svg>
<span class="t" style="left:417.3px;top:690.69px;font-size:11px;color:#d6d3cf;transform:scaleX(0.877);">Консоль отчетов *</span>
<svg style="position:absolute;left:553px;top:689px;overflow:visible" width="16" height="16" viewBox="0 0 16 16"><path d="M6 3l7.5 2.5-3.5 10-7-2.5z" fill="#ececec" stroke="#a8a8a8" stroke-width="0.8"/><rect x="0.5" y="0.5" width="8" height="10.5" fill="#ffffff" stroke="#9a9a9a"/><rect x="2" y="2" width="2" height="1.2" fill="#3030c8"/><rect x="5" y="2" width="2" height="1.2" fill="#3030c8"/><path d="M2 5.5h5M2 7.5h5M2 9.5h5M3.5 4.5v5.5M5.5 4.5v5.5" stroke="#a0a0a0" stroke-width="1"/></svg>
<span class="t" style="left:568px;top:690.69px;font-size:11px;color:#fff;transform:scaleX(0.877);">Реестр отгрузок</span>
<div style="left:100px;top:706px;width:1000px;height:18px;background:#ede6dc;"></div>
<div style="left:101px;top:707px;width:937px;height:16px;border:1px solid #dcd5c4;"></div>
<div style="left:1042px;top:707px;width:25px;height:16px;border:1px solid #dcd5c4;"></div>
<div style="left:1071px;top:707px;width:29px;height:16px;border:1px solid #dcd5c4;"></div>
<span class="t" style="left:104.3px;top:709.69px;font-size:11px;color:#000;transform:scaleX(0.867);">Для получения подсказки нажмите F1</span>
<span class="t" style="left:1045px;top:709.69px;font-size:11px;color:#9a978f;transform:scaleX(0.92);">CAP</span>
<span class="t" style="left:1074px;top:709.69px;font-size:11px;color:#000;transform:scaleX(0.86);">NUM</span>
<div style="left:100px;top:724px;width:1000px;height:26px;background:#d4d0c8;"></div>
<div style="left:100px;top:724px;width:1000px;height:1px;background:#d4d0c8;"></div>
<div style="left:100px;top:725px;width:1000px;height:1px;background:#ffffff;"></div>
<div style="left:102px;top:727px;width:44px;height:20px;background:#d4d0c8;border-top:1px solid #fff;border-left:1px solid #fff;border-right:1px solid #404040;border-bottom:1px solid #404040;box-shadow:inset -1px -1px #808080;"></div>
<svg style="position:absolute;left:104px;top:730px;overflow:visible" width="14" height="13" viewBox="0 0 14 13"><path d="M1 2q3-2 6 0v5q-3-2-6 0z" fill="#f05020"/><path d="M7.5 2q3 2 6 0v5q-3 2-6 0z" fill="#50b020"/><path d="M0 8q3-2 6 0v5q-3-2-6 0z" fill="#3060e0"/><path d="M6.5 8q3 2 6 0v5q-3 2-6 0z" fill="#f0c010"/></svg>
<span class="t" style="left:119px;top:732.69px;font-size:11px;font-weight:bold;color:#000;transform:scaleX(0.946);">Пуск</span>
<div style="left:152px;top:729px;width:1px;height:18px;background:#ffffff;"></div>
<div style="left:153px;top:729px;width:1px;height:18px;background:#a0a0a0;"></div>
<svg style="position:absolute;left:161px;top:730px;overflow:visible" width="14" height="15" viewBox="0 0 14 15"><ellipse cx="7" cy="8" rx="7" ry="3.2" fill="none" stroke="#40b0f0" stroke-width="1.1" transform="rotate(-35 7 8)"/><path d="M11.5 9H4.2a3.2 3.2 0 0 0 6.3 1.2" fill="none" stroke="#1878e0" stroke-width="2.2"/><path d="M4 8.3a3.4 3.4 0 0 1 6.8 0z" fill="#1878e0"/><path d="M5.8 7.6h3.2" stroke="#d0e8ff" stroke-width="1"/></svg>
<svg style="position:absolute;left:181px;top:730px;overflow:visible" width="15" height="15" viewBox="0 0 15 15"><rect x="0.5" y="1" width="11" height="13" rx="1" fill="#2070e0"/><rect x="1.5" y="2" width="9" height="2" fill="#60b0f8"/><path d="M3 5h6v6H3z" fill="#fff8c0"/><path d="M4.5 9.5l3-3" stroke="#303030" stroke-width="1.2"/><path d="M9 3l2 6" stroke="#c0e0ff" stroke-width="1.5"/><path d="M12 6l1.5-1.5L15 6l-1.5 1.5z" fill="#f07020"/></svg>
<svg style="position:absolute;left:201px;top:730px;overflow:visible" width="15" height="15" viewBox="0 0 15 15"><circle cx="7.5" cy="7.5" r="6.5" fill="#3060b0"/><circle cx="8.5" cy="6.5" r="3.5" fill="#50a0e0"/><path d="M1 7q0 7 7 7q6 0 6.5-6q-1 3-4 3.5q-3 0-4-2.5q-1-2 0-4q-2 0-2.5-2q-3 1-3 4z" fill="#f08010"/><path d="M1.5 9q1 3 4 4.5" stroke="#e04010" stroke-width="1.3" fill="none"/><path d="M5 1q-2 1-2 3" stroke="#f0a020" stroke-width="1.5" fill="none"/></svg>
<div style="left:222px;top:729px;width:1px;height:18px;background:#ffffff;"></div>
<div style="left:223px;top:729px;width:1px;height:18px;background:#a0a0a0;"></div>
<div style="left:229px;top:727px;width:139px;height:19px;background:#eae8e3;border-top:1px solid #404040;border-left:1px solid #404040;border-right:1px solid #fff;border-bottom:1px solid #fff;box-shadow:inset 1px 1px #808080;"></div>
<svg style="position:absolute;left:234px;top:731px;overflow:visible" width="13" height="13" viewBox="0 0 13 13"><rect x="0.5" y="0.5" width="12" height="12" rx="1.5" fill="#fff200" stroke="#b02a00"/><path d="M2.5 2.5v4" stroke="#e00000" stroke-width="1.6"/><path d="M10 3.2H6.3V6H10" fill="none" stroke="#e00000" stroke-width="1.6"/><path d="M2.5 8l1.5 3l1.5-3M7 8.5h3v2.5h-3z" fill="none" stroke="#b05000" stroke-width="1"/></svg>
<span class="t" style="left:251px;top:731.69px;font-size:11px;font-weight:bold;color:#000;transform:scaleX(0.894);">1С:Предприятие - Би...</span>
<div style="left:917px;top:729px;width:1px;height:18px;background:#ffffff;"></div>
<div style="left:918px;top:729px;width:1px;height:18px;background:#a0a0a0;"></div>
<div style="left:927px;top:731px;width:14px;height:14px;background:#0a246a;"></div>
<span class="t" style="left:928.5px;top:733.53px;font-size:10px;color:#fff;transform:scaleX(0.9);">RU</span>
<div style="left:945px;top:729px;width:1px;height:18px;background:#ffffff;"></div>
<div style="left:946px;top:729px;width:1px;height:18px;background:#a0a0a0;"></div>
<div style="left:951px;top:727px;width:149px;height:21px;border-top:1px solid #a0a0a0;border-left:1px solid #a0a0a0;"></div>
<svg style="position:absolute;left:953px;top:731px;overflow:visible" width="14" height="14" viewBox="0 0 14 14"><path d="M7 0.5l5.5 2v5q0 4.5-5.5 6q-5.5-1.5-5.5-6v-5z" fill="#f4e020" stroke="#6878b0"/><circle cx="7" cy="5.5" r="1.4" fill="#303030"/><rect x="6.3" y="6" width="1.4" height="4" fill="#303030"/></svg>
<svg style="position:absolute;left:969px;top:730px;overflow:visible" width="14" height="15" viewBox="0 0 14 15"><path d="M1 2l3 2 2-2 1 2 2-1-1 3 1 2-3 0-1 2-2-2-2 0 1-3z" fill="#30c030"/><path d="M3 11l6-4 4 4-6 4z" fill="#8890a8"/><path d="M5 11l4-2.5 2 2-4 2.5z" fill="#505a78"/></svg>
<svg style="position:absolute;left:984px;top:731px;overflow:visible" width="14" height="14" viewBox="0 0 14 14"><rect x="0.5" y="0.5" width="13" height="13" rx="2" fill="#f07018" stroke="#b04808"/><path d="M3 10.5h8" stroke="#fff" stroke-width="1.1"/><path d="M4 7.5q0 2 3 2t3-2v-1H4z" fill="none" stroke="#fff" stroke-width="1"/><path d="M10 7q2 0 1 2" stroke="#fff" fill="none"/><path d="M7 1.5q-2 2 0 3.5q1 1-0.5 2" stroke="#fff" stroke-width="1.1" fill="none"/></svg>
<svg style="position:absolute;left:1000px;top:731px;overflow:visible" width="14" height="14" viewBox="0 0 14 14"><rect x="5.5" y="0.5" width="7" height="6" fill="#80d0f8" stroke="#5070d0"/><path d="M7 8h4" stroke="#5070d0" stroke-width="1.5"/><rect x="0.5" y="4.5" width="7" height="6" fill="#70c8f8" stroke="#5070d0"/><path d="M1.5 12.5h5" stroke="#8090e0" stroke-width="2"/></svg>
<svg style="position:absolute;left:1015px;top:731px;overflow:visible" width="14" height="14" viewBox="0 0 14 14"><rect x="5.5" y="0.5" width="7" height="6" fill="#283870" stroke="#6070c0"/><path d="M7 8h4" stroke="#6070c0" stroke-width="1.5"/><rect x="0.5" y="4.5" width="7" height="6" fill="#283870" stroke="#6070c0"/><path d="M1.5 12.5h5" stroke="#8090e0" stroke-width="2"/></svg>
<svg style="position:absolute;left:1031px;top:731px;overflow:visible" width="14" height="14" viewBox="0 0 14 14"><path d="M0.5 5h3l4.5-4v12l-4.5-4h-3z" fill="#e06040" stroke="#501008" stroke-width="0.9"/><path d="M9.5 3.5q2 3.5 0 7M11.5 2q3 5 0 10" stroke="#a05040" stroke-width="1.2" fill="none"/></svg>
<svg style="position:absolute;left:1047px;top:731px;overflow:visible" width="14" height="14" viewBox="0 0 14 14"><path d="M0 0.5h3.5l2.5 7 5-7h3l-6.5 9-2 4.5h-1z" fill="#f00010"/><path d="M7.5 8.5l4.5 4" stroke="#000" stroke-width="2"/><path d="M12.5 9.5v3.5h-3.5z" fill="#000"/></svg>
<span class="t" style="left:1067.5px;top:732.69px;font-size:11px;color:#000;transform:scaleX(0.846);">15:06</span>
</div></body></html>
